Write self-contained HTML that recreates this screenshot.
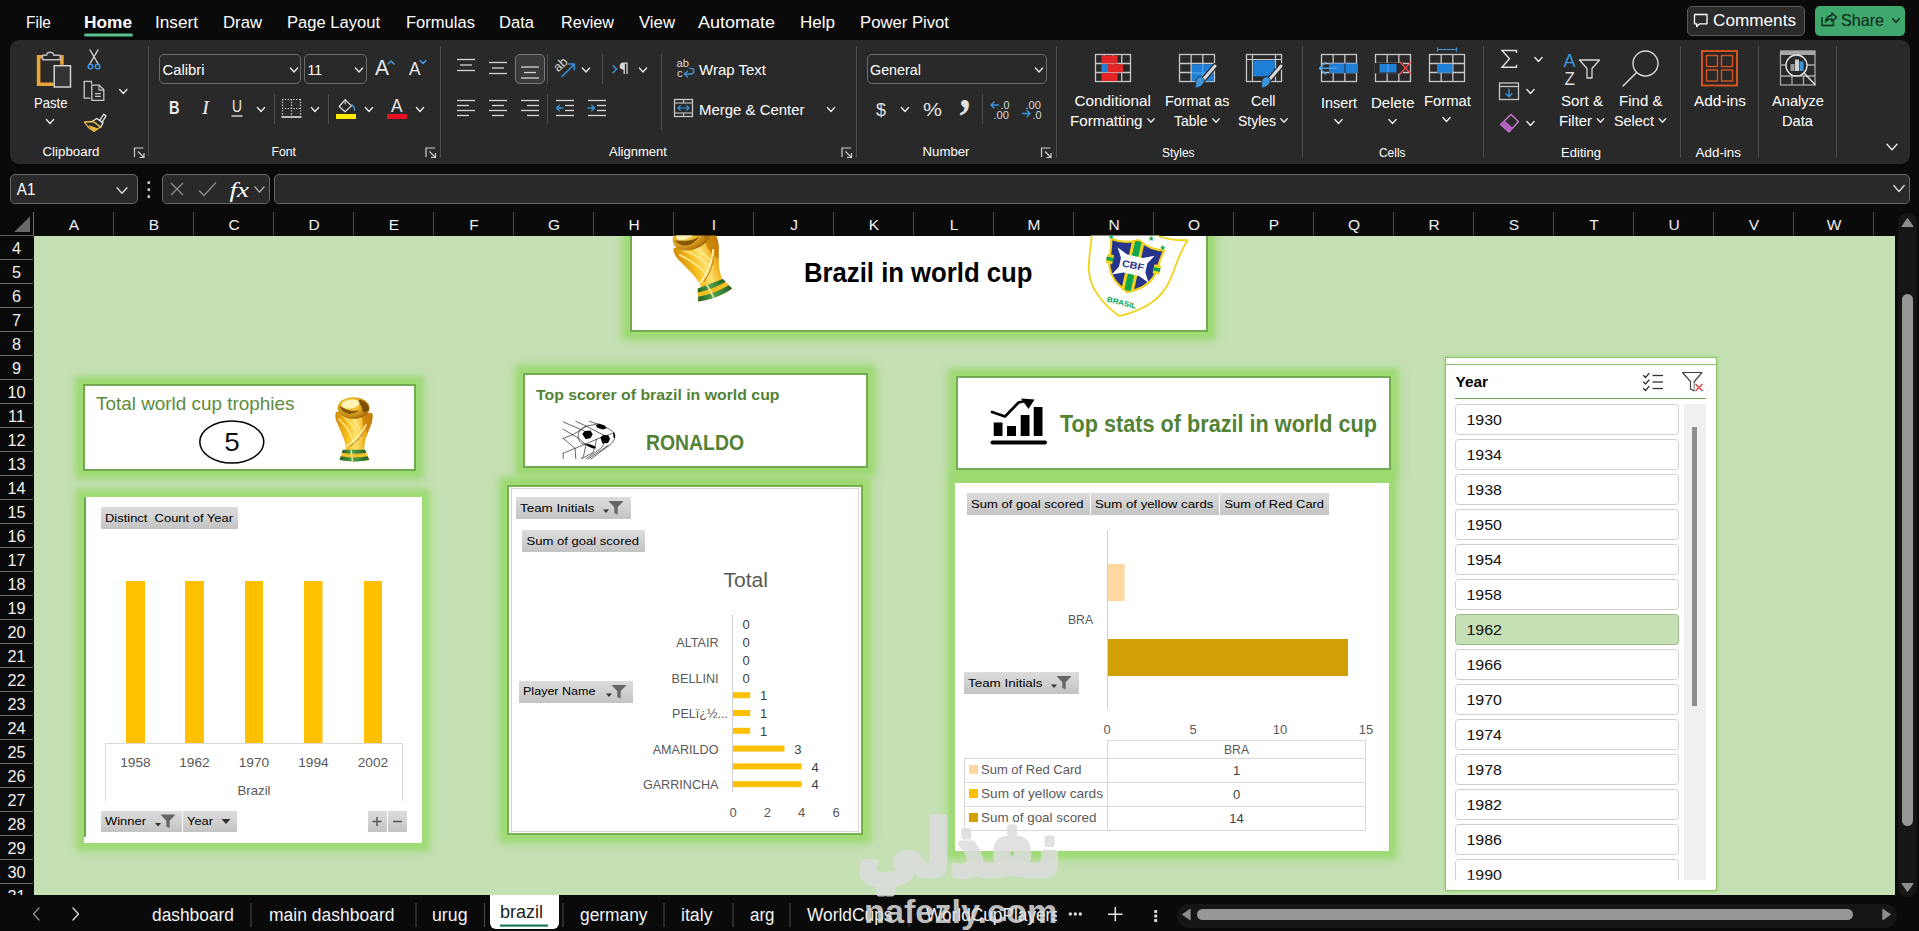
<!DOCTYPE html>
<html lang="en"><head><meta charset="utf-8"><title>Brazil in world cup - Excel</title>
<style>
*{margin:0;padding:0;box-sizing:border-box}
html,body{width:1919px;height:931px;overflow:hidden;background:#0a0a0a;font-family:"Liberation Sans", sans-serif;}
#app{position:relative;width:1919px;height:931px;overflow:hidden;background:#0a0a0a}
.a{position:absolute}
#ribbon{left:10px;top:40px;width:1900px;height:124px;background:#292929;border-radius:9px}
.fbox{background:#292929;border:1px solid #686868;border-radius:5px}
#sheet{left:33px;top:235px;width:1862px;height:660px;background:#c5e0b4;overflow:hidden}
.card{background:#fff;border:2px solid #72aa50}
.gl{box-shadow:0 0 5px 7px rgba(146,216,96,.62),0 0 9px 9px rgba(146,216,96,.34)}
.btn{background:linear-gradient(#dcdcdc,#d2d2d2 45%,#c3c3c3);}
svg{position:absolute;left:0;top:0;overflow:visible}
svg text{white-space:pre}
</style></head>
<body><div id="app">
<div id="ribbon" class="a"></div>
<div id="namebox" class="a fbox" style="left:10px;top:174px;width:128px;height:30px;"></div>
<div id="fxbox" class="a fbox" style="left:162px;top:174px;width:108px;height:30px;"></div>
<div id="formula" class="a fbox" style="left:274px;top:174px;width:1636px;height:30px;"></div>
<div id="comments" class="a" style="left:1687px;top:6px;width:118px;height:30px;background:#2b2b2b;border:1px solid #5a5a5a;border-radius:5px"></div>
<div id="share" class="a" style="left:1815px;top:6px;width:90px;height:30px;background:#3fa86c;border-radius:5px"></div>
<div class="a" style="left:515px;top:54px;width:30px;height:30px;background:#3a3a3a;border:1px solid #7a7a7a;border-radius:5px"></div>
<div class="a" style="left:159px;top:54px;width:142px;height:30px;border:1px solid #6c6c6c;border-radius:5px"></div>
<div class="a" style="left:304px;top:54px;width:63px;height:30px;border:1px solid #6c6c6c;border-radius:5px"></div>
<div class="a" style="left:867px;top:54px;width:180px;height:30px;border:1px solid #6c6c6c;border-radius:5px"></div>
<div id="sheet" class="a"></div>
<div class="a gl" style="left:630px;top:226px;width:577.5px;height:105.5px"></div>
<div class="a gl" style="left:83px;top:384px;width:332.5px;height:86.5px"></div>
<div class="a gl" style="left:84px;top:497px;width:337.5px;height:346px"></div>
<div class="a gl" style="left:523px;top:372.5px;width:344.5px;height:95px"></div>
<div class="a gl" style="left:507px;top:484.5px;width:355.5px;height:350.5px"></div>
<div class="a gl" style="left:956px;top:375.5px;width:435px;height:94px"></div>
<div class="a gl" style="left:954.5px;top:483px;width:434px;height:368px"></div>
<div class="a card" style="left:630px;top:226px;width:577.5px;height:105.5px;"></div>
<div class="a card" style="left:83px;top:384px;width:332.5px;height:86.5px;"></div>
<div class="a" style="left:84px;top:497px;width:337.5px;height:346px;background:#fff"></div>
<div class="a" style="left:84px;top:497px;width:2px;height:339.5px;background:#6aa84f"></div>
<div class="a btn" style="left:101px;top:507px;width:137px;height:22px;"></div>
<div class="a btn" style="left:101px;top:810.5px;width:81px;height:21.5px;"></div>
<div class="a btn" style="left:183px;top:810.5px;width:54px;height:21.5px;"></div>
<div class="a btn" style="left:367.5px;top:810.5px;width:19.5px;height:21.5px;"></div>
<div class="a btn" style="left:388px;top:810.5px;width:19px;height:21.5px;"></div>
<div class="a card" style="left:523px;top:372.5px;width:344.5px;height:95px;"></div>
<div class="a card" style="left:507px;top:484.5px;width:355.5px;height:350.5px;border-color:#76b24c"></div>
<div class="a" style="left:510.5px;top:488px;width:348.5px;height:343.5px;border:1px solid #d4d4d4"></div>
<div class="a btn" style="left:516px;top:497px;width:115px;height:22px;"></div>
<div class="a btn" style="left:522px;top:530px;width:123px;height:22px;"></div>
<div class="a btn" style="left:519px;top:681px;width:113.5px;height:21.5px;"></div>
<div class="a card" style="left:956px;top:375.5px;width:435px;height:94px;"></div>
<div class="a" style="left:954.5px;top:483px;width:434px;height:368px;background:#fff"></div>
<div class="a btn" style="left:967px;top:493px;width:122.5px;height:22px;"></div>
<div class="a btn" style="left:1091px;top:493px;width:128px;height:22px;"></div>
<div class="a btn" style="left:1220px;top:493px;width:109px;height:22px;"></div>
<div class="a btn" style="left:964px;top:672px;width:115px;height:22px;"></div>
<div class="a" style="left:1444.5px;top:357px;width:272.5px;height:534px;background:#fff;border:1px solid #8cc168;box-shadow:0 0 3px 1px rgba(150,214,104,.6)"></div>
<div class="a" style="left:1445px;top:364px;width:271.5px;height:1px;background:#8cc168"></div>
<div class="a" style="left:1683.5px;top:404px;width:22.5px;height:475.7px;background:#f0f0f0"></div>
<div class="a" style="left:1691.8px;top:427px;width:5.4px;height:279px;background:#8f8f8f"></div>
<div class="a" style="left:0px;top:205px;width:1919px;height:30.5px;background:#0a0a0a"></div>
<div class="a" style="left:0px;top:235px;width:33.5px;height:660px;background:#0a0a0a"></div>
<div class="a" style="left:1895px;top:205px;width:24px;height:690px;background:#0a0a0a"></div>
<div class="a" style="left:0px;top:895px;width:1919px;height:36px;background:#0a0a0a"></div>
<div class="a" style="left:489.5px;top:895px;width:69px;height:34px;background:#fff;border-radius:0 0 6px 6px"></div>
<svg width="1919" height="931" viewBox="0 0 1919 931">
<defs>
<clipPath id="sheetclip"><rect x="33.5" y="235.5" width="1861.5" height="659.5"/></clipPath>
<linearGradient id="gold" x1="0" y1="0" x2="1" y2="0"><stop offset="0" stop-color="#cf8a0a"/><stop offset=".3" stop-color="#f6bd1c"/><stop offset=".55" stop-color="#fde272"/><stop offset=".8" stop-color="#efae16"/><stop offset="1" stop-color="#bd7808"/></linearGradient>
<radialGradient id="globe" cx=".4" cy=".35" r=".75"><stop offset="0" stop-color="#fff0a8"/><stop offset=".35" stop-color="#f1bf30"/><stop offset=".8" stop-color="#b87a0e"/><stop offset="1" stop-color="#8a5608"/></radialGradient>
<linearGradient id="grn" x1="0" y1="0" x2="1" y2="0"><stop offset="0" stop-color="#1f5f26"/><stop offset=".45" stop-color="#4fa24a"/><stop offset="1" stop-color="#1f5f26"/></linearGradient>
<g id="trophy">
 <path d="M2 15c-1 3-.8 6 .3 9l7.200 17c1.200 3 2.200 7 2.700 12.500h18c.2-5.500 .8-9.500 1.800-12.500l5.500-15c1-3 1.500-6.500 .8-10z" fill="url(#gold)"/>
 <path d="M28 15l10 3c.6 3.500 0 7-1 10l-3.500 8c-2.500-3-4.500-7-5-11z" fill="#c17a0a" opacity=".75"/>
 <path d="M5 22c6 6 12 14 15 24M9 19c6 5 13 13 17 22M14 18c5 4 10 10 13 17" stroke="#ffe98a" stroke-width="1.600" fill="none" opacity=".9" stroke-linecap="round"/>
 <path d="M32 28c-4 9-11 16-19 21" stroke="#fff3b0" stroke-width="1.800" fill="none" opacity=".9" stroke-linecap="round"/>
 <path d="M30.500 33c-3.500 7-9 12.500-15 16.500" stroke="#b9770c" stroke-width="1.200" fill="none" opacity=".7"/>
 <ellipse cx="19.500" cy="11" rx="16" ry="10.800" fill="url(#globe)"/>
 <path d="M26 2.500c5 1.500 8.500 5 9 9.500-1.500 2.500-3.500 3.500-6 3-1-4.500-2.500-8-5.500-10.500z" fill="#6e4205" opacity=".85"/>
 <path d="M5.500 9c1 4 4.500 7 9.500 8 4-.3 7.500-1.500 10-3.500-4 .8-8 .5-11.500-.8-3.500-1.300-6-2.500-8-3.700z" fill="#6e4205" opacity=".8"/>
 <ellipse cx="16.500" cy="7" rx="9" ry="4.300" fill="#fff3b8" transform="rotate(-8 16.500 7)"/>
 <path d="M9 52.800h22l4.300 10c-9.500 2.300-20 2.300-29.800 0z" fill="#f3bd24"/>
 <path d="M9 52.800h22l1.300 3c-8 1.400-16.500 1.400-24.600 0z" fill="url(#grn)"/>
 <path d="M6.800 59.300c8.600 1.600 18 1.600 26.800 0l1.700 3.500c-9.500 2.300-20 2.300-29.800 0z" fill="url(#grn)"/>
 <path d="M17 52.500l1.500 12" stroke="#fff8c8" stroke-width="1.500" opacity=".8"/>
</g>
</defs>
<g clip-path="url(#sheetclip)">
<use href="#trophy" transform="translate(664.500 232.300) rotate(-21) scale(1.220)"/>
<g transform="translate(1132.500 268) rotate(12.500)">
<path d="M-46-40c14 6 31 5 45-3 14 8 31 10 47 5-7 20-5 34-10 48-6 17-20 28-37 36-18-8-32-19-37-36-4-14-2-30-8-50z" fill="#fff" stroke="#f3d21c" stroke-width="1.7" stroke-linejoin="round" transform="translate(-1.500 1) scale(1.070 1.060)"/>
<g transform="translate(0 -2) scale(.9 .92)">
<path d="M-30-24c10 2 21 0 30-5 9 5 20 7 30 5-3 13-2 22-5 31-4 11-13 17-25 22-12-5-21-11-25-22-3-9-2-18-5-31z" fill="#27348b" stroke="#f3d21c" stroke-width="2.4" stroke-linejoin="round"/>
<rect x="-7" y="-27.5" width="14" height="54.5" fill="#f3d21c" />
<rect x="-3.6" y="-27.5" width="7.2" height="54.5" fill="#12a650" />
<path d="M-30.500-7h7.500v10h-7.500zM23-7h7.500v10h-7.500z" fill="#f3d21c" />
<path d="M-30.500-4h7.500v4h-7.500zM23-4h7.500v4h-7.500z" fill="#12a650" />
<path d="M-21-16l12 5h18l12-5-6 10v10l6 10-12-5h-18l-12 5 6-10v-10z" fill="#fff" />
<text x="0" y="2.8" font-family='"Liberation Sans", sans-serif' font-size="10.5" fill="#27348b" font-weight="700" text-anchor="middle" textLength="25" lengthAdjust="spacingAndGlyphs" >CBF</text>
</g>
</g>
<text x="0" y="0" font-family='"Liberation Sans", sans-serif' font-size="7.4" fill="#12a650" font-weight="700" textLength="30" lengthAdjust="spacingAndGlyphs" transform="translate(1106.500 301.500) rotate(14)">BRASIL</text>
<text x="1111" y="239.2" font-family='"DejaVu Sans", sans-serif' font-size="7.5" fill="#12a650" text-anchor="middle" >★</text>
<text x="1130.5" y="233.7" font-family='"DejaVu Sans", sans-serif' font-size="7.5" fill="#12a650" text-anchor="middle" >★</text>
<text x="1151" y="241.2" font-family='"DejaVu Sans", sans-serif' font-size="7.5" fill="#12a650" text-anchor="middle" >★</text>
<text x="1162.5" y="249.7" font-family='"DejaVu Sans", sans-serif' font-size="7.5" fill="#12a650" text-anchor="middle" >★</text>
</g>
<text x="804" y="281.932" font-family='"Liberation Sans", sans-serif' font-size="28" fill="#000" font-weight="700" textLength="228.5" lengthAdjust="spacingAndGlyphs" >Brazil in world cup</text>
<text x="96" y="409.5" font-family='"Liberation Sans", sans-serif' font-size="18.5" fill="#5d8b3c" textLength="198.5" lengthAdjust="spacingAndGlyphs" >Total world cup trophies</text>
<ellipse cx="231.8" cy="442" rx="32" ry="21" fill="none" stroke="#000" stroke-width="1.5" />
<text x="232" y="450.944" font-family='"Liberation Sans", sans-serif' font-size="26" fill="#111" text-anchor="middle" textLength="15.5" lengthAdjust="spacingAndGlyphs" >5</text>
<use href="#trophy" transform="translate(334 397)"/>
<text x="105" y="521.99" font-family='"Liberation Sans", sans-serif' font-size="11.6" fill="#000" textLength="128" lengthAdjust="spacingAndGlyphs" >Distinct  Count of Year</text>
<rect x="126" y="581" width="19" height="162" fill="#ffc000" />
<rect x="185" y="581" width="19" height="162" fill="#ffc000" />
<rect x="245" y="581" width="18" height="162" fill="#ffc000" />
<rect x="304" y="581" width="18.5" height="162" fill="#ffc000" />
<rect x="364" y="581" width="18" height="162" fill="#ffc000" />
<path d="M105.500 801V743.500H402.500V801" fill="none" stroke="#d9d9d9" stroke-width="1" />
<text x="135.5" y="766.972" font-family='"Liberation Sans", sans-serif' font-size="13" fill="#595959" text-anchor="middle" textLength="30.5" lengthAdjust="spacingAndGlyphs" >1958</text>
<text x="194.5" y="766.972" font-family='"Liberation Sans", sans-serif' font-size="13" fill="#595959" text-anchor="middle" textLength="30.5" lengthAdjust="spacingAndGlyphs" >1962</text>
<text x="254" y="766.972" font-family='"Liberation Sans", sans-serif' font-size="13" fill="#595959" text-anchor="middle" textLength="30.5" lengthAdjust="spacingAndGlyphs" >1970</text>
<text x="313.5" y="766.972" font-family='"Liberation Sans", sans-serif' font-size="13" fill="#595959" text-anchor="middle" textLength="30.5" lengthAdjust="spacingAndGlyphs" >1994</text>
<text x="373" y="766.972" font-family='"Liberation Sans", sans-serif' font-size="13" fill="#595959" text-anchor="middle" textLength="30.5" lengthAdjust="spacingAndGlyphs" >2002</text>
<text x="254" y="795.472" font-family='"Liberation Sans", sans-serif' font-size="13" fill="#595959" text-anchor="middle" textLength="33" lengthAdjust="spacingAndGlyphs" >Brazil</text>
<text x="105" y="824.99" font-family='"Liberation Sans", sans-serif' font-size="11.6" fill="#000" textLength="41" lengthAdjust="spacingAndGlyphs" >Winner</text>
<path d="M155 823h6l-3 3.500z" fill="#333" />
<path d="M160.5 814.5h15l-5.800 6.300v7.200l-3.400-1.500v-5.700z" fill="#666" />
<text x="187" y="824.99" font-family='"Liberation Sans", sans-serif' font-size="11.6" fill="#000" textLength="26" lengthAdjust="spacingAndGlyphs" >Year</text>
<path d="M221.500 819h9l-4.500 5z" fill="#333" />
<path d="M372.500 821.500h9M377 817v9" fill="none" stroke="#555" stroke-width="1.5" />
<path d="M393 821.500h9" fill="none" stroke="#555" stroke-width="1.5" />
<text x="536" y="399.5" font-family='"Liberation Sans", sans-serif' font-size="15.3" fill="#548235" font-weight="700" textLength="243.5" lengthAdjust="spacingAndGlyphs" >Top scorer of brazil in world cup</text>
<text x="646" y="449.999" font-family='"Liberation Sans", sans-serif' font-size="21.8" fill="#548235" font-weight="700" textLength="98" lengthAdjust="spacingAndGlyphs" >RONALDO</text>
<g stroke="#222" fill="none" stroke-width=".68" stroke-linecap="round" stroke-linejoin="round">
<path d="M563.200 421.900L583.500 430.600M563.200 429.300L579 438.400L586 444.800M563.200 438.400L573.200 434.500L586.800 426.100L598.400 423.900M563.200 438.400L575.100 448.400L575.800 458.700M563.200 453.200L575.100 448.400L586.100 443.800L596.400 439.300L611.900 433.500M563.200 453.200V458.700M575.800 421.300L586.100 426.100L603.500 435.100M589.300 421.300L599 424.500C606 427 611 429.500 613.500 432.600C615 435 615 437 614.500 438.500C613.500 441.500 612 443 610 444.800L591.300 458.700M586.100 443.800L583.500 456.400L581 458.700M596.400 439.300L595.100 446.100L592.900 452.600L582.200 458.400M604.800 435.800L602.900 446.100L600.300 448.700L586.100 458.700M588.500 458.700L608 445.500M586.100 426.100C582 428 579.500 430 579 432C578 434.500 578 436.500 578.400 438.400C579 441 580.500 442.500 582.200 443.500L586.100 444.800" fill="none" />
</g>
<path d="M582.300 434l2.200-3 6-0.600 2.200 3.800-2.200 4-5 .8z" fill="#000" />
<path d="M595.800 425.500l3.500-1.700 5.500 1.800 1.800 2.700-3.800 1.200-5.500-1.800z" fill="#000" />
<path d="M600.300 437.500l3.200-2.700 5 .8 1.500 3.500-2 3.800-5.500 .6z" fill="#000" />
<path d="M586 444l4 .3 5.500 2.300 .3 1.800-3.500-.2-5-2.200z" fill="#000" />
<path d="M613.300 432.500c1.200 1.800 1.300 3.500 .8 5.300" fill="none" stroke="#000" stroke-width="1.6" />
<text x="520" y="511.99" font-family='"Liberation Sans", sans-serif' font-size="11.6" fill="#000" textLength="74.5" lengthAdjust="spacingAndGlyphs" >Team Initials</text>
<path d="M603 509.5h6l-3 3.500z" fill="#333" />
<path d="M608.5 501h15l-5.800 6.300v7.200l-3.400-1.500v-5.700z" fill="#666" />
<text x="526.5" y="544.99" font-family='"Liberation Sans", sans-serif' font-size="11.6" fill="#000" textLength="112.5" lengthAdjust="spacingAndGlyphs" >Sum of goal scored</text>
<text x="523" y="695.49" font-family='"Liberation Sans", sans-serif' font-size="11.6" fill="#000" textLength="72.5" lengthAdjust="spacingAndGlyphs" >Player Name</text>
<path d="M606 693.5h6l-3 3.500z" fill="#333" />
<path d="M611.5 685h15l-5.800 6.300v7.200l-3.400-1.500v-5.700z" fill="#666" />
<text x="723.5" y="587.052" font-family='"Liberation Sans", sans-serif' font-size="20.5" fill="#595959" textLength="44.5" lengthAdjust="spacingAndGlyphs" >Total</text>
<line x1="732.5" y1="614" x2="732.5" y2="792" stroke="#d0d0d0" stroke-width="1" />
<text x="746" y="629.272" font-family='"Liberation Sans", sans-serif' font-size="13" fill="#404040" text-anchor="middle" >0</text>
<text x="746" y="647.072" font-family='"Liberation Sans", sans-serif' font-size="13" fill="#404040" text-anchor="middle" >0</text>
<text x="746" y="664.872" font-family='"Liberation Sans", sans-serif' font-size="13" fill="#404040" text-anchor="middle" >0</text>
<text x="746" y="682.672" font-family='"Liberation Sans", sans-serif' font-size="13" fill="#404040" text-anchor="middle" >0</text>
<rect x="733" y="692.2" width="17.15" height="6" fill="#ffc000" />
<text x="763.65" y="700.472" font-family='"Liberation Sans", sans-serif' font-size="13" fill="#404040" text-anchor="middle" >1</text>
<rect x="733" y="710" width="17.15" height="6" fill="#ffc000" />
<text x="763.65" y="718.272" font-family='"Liberation Sans", sans-serif' font-size="13" fill="#404040" text-anchor="middle" >1</text>
<rect x="733" y="727.8" width="17.15" height="6" fill="#ffc000" />
<text x="763.65" y="736.072" font-family='"Liberation Sans", sans-serif' font-size="13" fill="#404040" text-anchor="middle" >1</text>
<rect x="733" y="745.6" width="51.45" height="6" fill="#ffc000" />
<text x="797.95" y="753.872" font-family='"Liberation Sans", sans-serif' font-size="13" fill="#404040" text-anchor="middle" >3</text>
<rect x="733" y="763.4" width="68.6" height="6" fill="#ffc000" />
<text x="815.1" y="771.672" font-family='"Liberation Sans", sans-serif' font-size="13" fill="#404040" text-anchor="middle" >4</text>
<rect x="733" y="781.2" width="68.6" height="6" fill="#ffc000" />
<text x="815.1" y="789.472" font-family='"Liberation Sans", sans-serif' font-size="13" fill="#404040" text-anchor="middle" >4</text>
<text x="718.5" y="646.934" font-family='"Liberation Sans", sans-serif' font-size="12.6" fill="#595959" text-anchor="end" >ALTAIR</text>
<text x="718.5" y="682.534" font-family='"Liberation Sans", sans-serif' font-size="12.6" fill="#595959" text-anchor="end" >BELLINI</text>
<text x="728" y="718.134" font-family='"Liberation Sans", sans-serif' font-size="12.6" fill="#595959" text-anchor="end" >PELï¿½...</text>
<text x="718.5" y="753.734" font-family='"Liberation Sans", sans-serif' font-size="12.6" fill="#595959" text-anchor="end" >AMARILDO</text>
<text x="718.5" y="789.334" font-family='"Liberation Sans", sans-serif' font-size="12.6" fill="#595959" text-anchor="end" >GARRINCHA</text>
<text x="733" y="817.072" font-family='"Liberation Sans", sans-serif' font-size="13" fill="#595959" text-anchor="middle" >0</text>
<text x="767.3" y="817.072" font-family='"Liberation Sans", sans-serif' font-size="13" fill="#595959" text-anchor="middle" >2</text>
<text x="801.6" y="817.072" font-family='"Liberation Sans", sans-serif' font-size="13" fill="#595959" text-anchor="middle" >4</text>
<text x="836" y="817.072" font-family='"Liberation Sans", sans-serif' font-size="13" fill="#595959" text-anchor="middle" >6</text>
<text x="1060" y="431.5" font-family='"Liberation Sans", sans-serif' font-size="23.3" fill="#548235" font-weight="700" textLength="317" lengthAdjust="spacingAndGlyphs" >Top stats of brazil in world cup</text>
<rect x="990.5" y="440.5" width="56.5" height="4" fill="#000" rx="2" />
<rect x="993.7" y="422.5" width="8.8" height="13.5" fill="#000" />
<rect x="1007" y="426" width="9" height="10" fill="#000" />
<rect x="1020.7" y="415" width="8.8" height="21" fill="#000" />
<rect x="1033.7" y="407" width="8.8" height="29" fill="#000" />
<path d="M992 412l13 4.500 13.500-14 9-2" fill="none" stroke="#000" stroke-width="2.6" stroke-linecap="round" stroke-linejoin="round"/>
<path d="M1021 398.500l13.500 1-6 9.500z" fill="#000" />
<text x="971" y="507.99" font-family='"Liberation Sans", sans-serif' font-size="11.6" fill="#000" textLength="112.5" lengthAdjust="spacingAndGlyphs" >Sum of goal scored</text>
<text x="1095" y="507.99" font-family='"Liberation Sans", sans-serif' font-size="11.6" fill="#000" textLength="118.5" lengthAdjust="spacingAndGlyphs" >Sum of yellow cards</text>
<text x="1224.5" y="507.99" font-family='"Liberation Sans", sans-serif' font-size="11.6" fill="#000" textLength="99.5" lengthAdjust="spacingAndGlyphs" >Sum of Red Card</text>
<line x1="1107.5" y1="530" x2="1107.5" y2="709.5" stroke="#d0d0d0" stroke-width="1" />
<rect x="1108" y="564" width="16.7" height="37" fill="#ffd8a0" />
<rect x="1108" y="639" width="240" height="37" fill="#d29f04" />
<text x="1068" y="624.334" font-family='"Liberation Sans", sans-serif' font-size="12.6" fill="#595959" textLength="25" lengthAdjust="spacingAndGlyphs" >BRA</text>
<text x="968" y="686.99" font-family='"Liberation Sans", sans-serif' font-size="11.6" fill="#000" textLength="74.5" lengthAdjust="spacingAndGlyphs" >Team Initials</text>
<path d="M1051 684.5h6l-3 3.500z" fill="#333" />
<path d="M1056.5 676h15l-5.800 6.300v7.200l-3.400-1.500v-5.700z" fill="#666" />
<text x="1107" y="734.472" font-family='"Liberation Sans", sans-serif' font-size="13" fill="#595959" text-anchor="middle" >0</text>
<text x="1193" y="734.472" font-family='"Liberation Sans", sans-serif' font-size="13" fill="#595959" text-anchor="middle" >5</text>
<text x="1280" y="734.472" font-family='"Liberation Sans", sans-serif' font-size="13" fill="#595959" text-anchor="middle" >10</text>
<text x="1366" y="734.472" font-family='"Liberation Sans", sans-serif' font-size="13" fill="#595959" text-anchor="middle" >15</text>
<path d="M1107.500 758.500V740.500H1365.500V758.500" fill="none" stroke="#d9d9d9" stroke-width="1" />
<rect x="964.5" y="758.5" width="401" height="72" fill="none" stroke="#d9d9d9" stroke-width="1" />
<line x1="1107.5" y1="758.5" x2="1107.5" y2="830.5" stroke="#d9d9d9" stroke-width="1" />
<line x1="964.5" y1="782.5" x2="1365.5" y2="782.5" stroke="#d9d9d9" stroke-width="1" />
<line x1="964.5" y1="806.5" x2="1365.5" y2="806.5" stroke="#d9d9d9" stroke-width="1" />
<text x="1236.5" y="753.834" font-family='"Liberation Sans", sans-serif' font-size="12.6" fill="#595959" text-anchor="middle" textLength="25" lengthAdjust="spacingAndGlyphs" >BRA</text>
<rect x="969" y="765" width="9" height="9" fill="#ffd8a0" />
<text x="981" y="773.834" font-family='"Liberation Sans", sans-serif' font-size="12.6" fill="#595959" textLength="100.5" lengthAdjust="spacingAndGlyphs" >Sum of Red Card</text>
<text x="1236.5" y="774.972" font-family='"Liberation Sans", sans-serif' font-size="13" fill="#404040" text-anchor="middle" >1</text>
<rect x="969" y="789" width="9" height="9" fill="#ffc000" />
<text x="981" y="797.834" font-family='"Liberation Sans", sans-serif' font-size="12.6" fill="#595959" textLength="122" lengthAdjust="spacingAndGlyphs" >Sum of yellow cards</text>
<text x="1236.5" y="798.972" font-family='"Liberation Sans", sans-serif' font-size="13" fill="#404040" text-anchor="middle" >0</text>
<rect x="969" y="813" width="9" height="9" fill="#d29f04" />
<text x="981" y="821.834" font-family='"Liberation Sans", sans-serif' font-size="12.6" fill="#595959" textLength="115.5" lengthAdjust="spacingAndGlyphs" >Sum of goal scored</text>
<text x="1236.5" y="822.972" font-family='"Liberation Sans", sans-serif' font-size="13" fill="#404040" text-anchor="middle" >14</text>
<text x="1455.5" y="387.022" font-family='"Liberation Sans", sans-serif' font-size="14.6" fill="#000" font-weight="700" textLength="32.5" lengthAdjust="spacingAndGlyphs" >Year</text>
<line x1="1455" y1="398.5" x2="1706" y2="398.5" stroke="#6aa84f" stroke-width="1.2" />
<path d="M1643.500 375.5l2 2 3.500-4" fill="none" stroke="#333" stroke-width="1.2" stroke-linecap="round" stroke-linejoin="round"/>
<line x1="1652.5" y1="375.5" x2="1663" y2="375.5" stroke="#333" stroke-width="1.3" />
<path d="M1643.500 382l2 2 3.500-4" fill="none" stroke="#333" stroke-width="1.2" stroke-linecap="round" stroke-linejoin="round"/>
<line x1="1652.5" y1="382" x2="1663" y2="382" stroke="#333" stroke-width="1.3" />
<path d="M1643.500 388.5l2 2 3.500-4" fill="none" stroke="#333" stroke-width="1.2" stroke-linecap="round" stroke-linejoin="round"/>
<line x1="1652.5" y1="388.5" x2="1663" y2="388.5" stroke="#333" stroke-width="1.3" />
<path d="M1682.500 372.500h19.500l-7.700 9v9.500l-3.800-2v-7.500z" fill="none" stroke="#444" stroke-width="1.2" stroke-linejoin="round"/>
<rect x="1694.5" y="383" width="9" height="9" fill="#fff" />
<path d="M1695.500 384l7 7M1702.500 384l-7 7" fill="none" stroke="#e03c3c" stroke-width="1.3" />
<clipPath id="slc"><rect x="1446" y="400" width="236" height="479.700"/></clipPath>
<g clip-path="url(#slc)">
<rect x="1455.5" y="404.5" width="223" height="30" fill="#fff" rx="3" stroke="#cfcfcf" stroke-width="1" />
<text x="1466.5" y="425.229" font-family='"Liberation Sans", sans-serif' font-size="15.2" fill="#111" textLength="35.5" lengthAdjust="spacingAndGlyphs" >1930</text>
<rect x="1455.5" y="439.5" width="223" height="30" fill="#fff" rx="3" stroke="#cfcfcf" stroke-width="1" />
<text x="1466.5" y="460.229" font-family='"Liberation Sans", sans-serif' font-size="15.2" fill="#111" textLength="35.5" lengthAdjust="spacingAndGlyphs" >1934</text>
<rect x="1455.5" y="474.5" width="223" height="30" fill="#fff" rx="3" stroke="#cfcfcf" stroke-width="1" />
<text x="1466.5" y="495.229" font-family='"Liberation Sans", sans-serif' font-size="15.2" fill="#111" textLength="35.5" lengthAdjust="spacingAndGlyphs" >1938</text>
<rect x="1455.5" y="509.5" width="223" height="30" fill="#fff" rx="3" stroke="#cfcfcf" stroke-width="1" />
<text x="1466.5" y="530.229" font-family='"Liberation Sans", sans-serif' font-size="15.2" fill="#111" textLength="35.5" lengthAdjust="spacingAndGlyphs" >1950</text>
<rect x="1455.5" y="544.5" width="223" height="30" fill="#fff" rx="3" stroke="#cfcfcf" stroke-width="1" />
<text x="1466.5" y="565.229" font-family='"Liberation Sans", sans-serif' font-size="15.2" fill="#111" textLength="35.5" lengthAdjust="spacingAndGlyphs" >1954</text>
<rect x="1455.5" y="579.5" width="223" height="30" fill="#fff" rx="3" stroke="#cfcfcf" stroke-width="1" />
<text x="1466.5" y="600.229" font-family='"Liberation Sans", sans-serif' font-size="15.2" fill="#111" textLength="35.5" lengthAdjust="spacingAndGlyphs" >1958</text>
<rect x="1455.5" y="614.5" width="223" height="30" fill="#c5e0b4" rx="3" stroke="#9ab888" stroke-width="1" />
<text x="1466.5" y="635.229" font-family='"Liberation Sans", sans-serif' font-size="15.2" fill="#111" textLength="35.5" lengthAdjust="spacingAndGlyphs" >1962</text>
<rect x="1455.5" y="649.5" width="223" height="30" fill="#fff" rx="3" stroke="#cfcfcf" stroke-width="1" />
<text x="1466.5" y="670.229" font-family='"Liberation Sans", sans-serif' font-size="15.2" fill="#111" textLength="35.5" lengthAdjust="spacingAndGlyphs" >1966</text>
<rect x="1455.5" y="684.5" width="223" height="30" fill="#fff" rx="3" stroke="#cfcfcf" stroke-width="1" />
<text x="1466.5" y="705.229" font-family='"Liberation Sans", sans-serif' font-size="15.2" fill="#111" textLength="35.5" lengthAdjust="spacingAndGlyphs" >1970</text>
<rect x="1455.5" y="719.5" width="223" height="30" fill="#fff" rx="3" stroke="#cfcfcf" stroke-width="1" />
<text x="1466.5" y="740.229" font-family='"Liberation Sans", sans-serif' font-size="15.2" fill="#111" textLength="35.5" lengthAdjust="spacingAndGlyphs" >1974</text>
<rect x="1455.5" y="754.5" width="223" height="30" fill="#fff" rx="3" stroke="#cfcfcf" stroke-width="1" />
<text x="1466.5" y="775.229" font-family='"Liberation Sans", sans-serif' font-size="15.2" fill="#111" textLength="35.5" lengthAdjust="spacingAndGlyphs" >1978</text>
<rect x="1455.5" y="789.5" width="223" height="30" fill="#fff" rx="3" stroke="#cfcfcf" stroke-width="1" />
<text x="1466.5" y="810.229" font-family='"Liberation Sans", sans-serif' font-size="15.2" fill="#111" textLength="35.5" lengthAdjust="spacingAndGlyphs" >1982</text>
<rect x="1455.5" y="824.5" width="223" height="30" fill="#fff" rx="3" stroke="#cfcfcf" stroke-width="1" />
<text x="1466.5" y="845.229" font-family='"Liberation Sans", sans-serif' font-size="15.2" fill="#111" textLength="35.5" lengthAdjust="spacingAndGlyphs" >1986</text>
<rect x="1455.5" y="859.5" width="223" height="30" fill="#fff" rx="3" stroke="#cfcfcf" stroke-width="1" />
<text x="1466.5" y="880.229" font-family='"Liberation Sans", sans-serif' font-size="15.2" fill="#111" textLength="35.5" lengthAdjust="spacingAndGlyphs" >1990</text>
</g>
<text x="26" y="28.2168" font-family='"Liberation Sans", sans-serif' font-size="17.2" fill="#ffffff" textLength="25" lengthAdjust="spacingAndGlyphs" >File</text>
<text x="84" y="28.2168" font-family='"Liberation Sans", sans-serif' font-size="17.2" fill="#ffffff" font-weight="700" textLength="48" lengthAdjust="spacingAndGlyphs" >Home</text>
<text x="155" y="28.2168" font-family='"Liberation Sans", sans-serif' font-size="17.2" fill="#ffffff" textLength="43" lengthAdjust="spacingAndGlyphs" >Insert</text>
<text x="223" y="28.2168" font-family='"Liberation Sans", sans-serif' font-size="17.2" fill="#ffffff" textLength="39" lengthAdjust="spacingAndGlyphs" >Draw</text>
<text x="287" y="28.2168" font-family='"Liberation Sans", sans-serif' font-size="17.2" fill="#ffffff" textLength="93" lengthAdjust="spacingAndGlyphs" >Page Layout</text>
<text x="406" y="28.2168" font-family='"Liberation Sans", sans-serif' font-size="17.2" fill="#ffffff" textLength="69" lengthAdjust="spacingAndGlyphs" >Formulas</text>
<text x="499" y="28.2168" font-family='"Liberation Sans", sans-serif' font-size="17.2" fill="#ffffff" textLength="35" lengthAdjust="spacingAndGlyphs" >Data</text>
<text x="561" y="28.2168" font-family='"Liberation Sans", sans-serif' font-size="17.2" fill="#ffffff" textLength="53" lengthAdjust="spacingAndGlyphs" >Review</text>
<text x="639" y="28.2168" font-family='"Liberation Sans", sans-serif' font-size="17.2" fill="#ffffff" textLength="36" lengthAdjust="spacingAndGlyphs" >View</text>
<text x="698" y="28.2168" font-family='"Liberation Sans", sans-serif' font-size="17.2" fill="#ffffff" textLength="77" lengthAdjust="spacingAndGlyphs" >Automate</text>
<text x="800" y="28.2168" font-family='"Liberation Sans", sans-serif' font-size="17.2" fill="#ffffff" textLength="35" lengthAdjust="spacingAndGlyphs" >Help</text>
<text x="860" y="28.2168" font-family='"Liberation Sans", sans-serif' font-size="17.2" fill="#ffffff" textLength="89" lengthAdjust="spacingAndGlyphs" >Power Pivot</text>
<rect x="84" y="33.5" width="49" height="3" fill="#5ec08e" rx="1.5" />
<path d="M1694.500 14.500h12.500v9.300h-7.300l-3 2.800v-2.800h-2.200z" fill="none" stroke="#ffffff" stroke-width="1.3" stroke-linejoin="round"/>
<text x="1713" y="26.176" font-family='"Liberation Sans", sans-serif' font-size="16.5" fill="#ffffff" textLength="83" lengthAdjust="spacingAndGlyphs" >Comments</text>
<path d="M1822 17v8.5h11.5v-4M1825.5 22c.6-4.2 3.2-6.3 6.4-6.5v-2.6l4.6 4.3-4.6 4.3v-2.6c-2.6-.1-4.8.8-6.4 3.1z" fill="none" stroke="#0b2417" stroke-width="1.3" stroke-linejoin="round"/>
<text x="1841" y="26.176" font-family='"Liberation Sans", sans-serif' font-size="16.5" fill="#0b2417" textLength="43" lengthAdjust="spacingAndGlyphs" >Share</text>
<path d="M1892.8 18.7L1896 22.3L1899.2 18.7" fill="none" stroke="#0b2417" stroke-width="1.4" stroke-linecap="round" stroke-linejoin="round"/>
<text x="16.8" y="195.176" font-family='"Liberation Sans", sans-serif' font-size="16.5" fill="#ffffff" textLength="18.5" lengthAdjust="spacingAndGlyphs" >A1</text>
<path d="M117 187.7L122 193.3L127 187.7" fill="none" stroke="#d8d8d8" stroke-width="1.4" stroke-linecap="round" stroke-linejoin="round"/>
<rect x="147.5" y="181.3" width="2.6" height="2.6" fill="#cfcfcf" rx="0.6" />
<rect x="147.5" y="188.3" width="2.6" height="2.6" fill="#cfcfcf" rx="0.6" />
<rect x="147.5" y="195.3" width="2.6" height="2.6" fill="#cfcfcf" rx="0.6" />
<path d="M171 183l12 12M183 183l-12 12" fill="none" stroke="#8a8a8a" stroke-width="1.4" />
<path d="M199 190.5l5 5 12-13" fill="none" stroke="#8a8a8a" stroke-width="1.4" />
<text x="229.5" y="197.052" font-family='"Liberation Serif", serif' font-size="20.5" fill="#ffffff" font-style="italic" textLength="19.5" lengthAdjust="spacingAndGlyphs" >fx</text>
<path d="M254.9 186.9L259.5 192.1L264.1 186.9" fill="none" stroke="#bdbdbd" stroke-width="1.3" stroke-linecap="round" stroke-linejoin="round"/>
<path d="M1893.8 185.5L1899 191.5L1904.2 185.5" fill="none" stroke="#d8d8d8" stroke-width="1.4" stroke-linecap="round" stroke-linejoin="round"/>
<path d="M30 216.500V232H14.200z" fill="#696969" />
<line x1="0" y1="235.5" x2="33.5" y2="235.5" stroke="#5e5e5e" stroke-width="1" />
<line x1="33.5" y1="212" x2="33.5" y2="235.5" stroke="#6e6e6e" stroke-width="1" />
<text x="74" y="229.832" font-family='"Liberation Sans", sans-serif' font-size="15.5" fill="#f0f0f0" text-anchor="middle" >A</text>
<line x1="113.5" y1="212" x2="113.5" y2="235.5" stroke="#4a4a4a" stroke-width="1" />
<text x="154" y="229.832" font-family='"Liberation Sans", sans-serif' font-size="15.5" fill="#f0f0f0" text-anchor="middle" >B</text>
<line x1="193.5" y1="212" x2="193.5" y2="235.5" stroke="#4a4a4a" stroke-width="1" />
<text x="234" y="229.832" font-family='"Liberation Sans", sans-serif' font-size="15.5" fill="#f0f0f0" text-anchor="middle" >C</text>
<line x1="273.5" y1="212" x2="273.5" y2="235.5" stroke="#4a4a4a" stroke-width="1" />
<text x="314" y="229.832" font-family='"Liberation Sans", sans-serif' font-size="15.5" fill="#f0f0f0" text-anchor="middle" >D</text>
<line x1="353.5" y1="212" x2="353.5" y2="235.5" stroke="#4a4a4a" stroke-width="1" />
<text x="394" y="229.832" font-family='"Liberation Sans", sans-serif' font-size="15.5" fill="#f0f0f0" text-anchor="middle" >E</text>
<line x1="433.5" y1="212" x2="433.5" y2="235.5" stroke="#4a4a4a" stroke-width="1" />
<text x="474" y="229.832" font-family='"Liberation Sans", sans-serif' font-size="15.5" fill="#f0f0f0" text-anchor="middle" >F</text>
<line x1="513.5" y1="212" x2="513.5" y2="235.5" stroke="#4a4a4a" stroke-width="1" />
<text x="554" y="229.832" font-family='"Liberation Sans", sans-serif' font-size="15.5" fill="#f0f0f0" text-anchor="middle" >G</text>
<line x1="593.5" y1="212" x2="593.5" y2="235.5" stroke="#4a4a4a" stroke-width="1" />
<text x="634" y="229.832" font-family='"Liberation Sans", sans-serif' font-size="15.5" fill="#f0f0f0" text-anchor="middle" >H</text>
<line x1="673.5" y1="212" x2="673.5" y2="235.5" stroke="#4a4a4a" stroke-width="1" />
<text x="714" y="229.832" font-family='"Liberation Sans", sans-serif' font-size="15.5" fill="#f0f0f0" text-anchor="middle" >I</text>
<line x1="753.5" y1="212" x2="753.5" y2="235.5" stroke="#4a4a4a" stroke-width="1" />
<text x="794" y="229.832" font-family='"Liberation Sans", sans-serif' font-size="15.5" fill="#f0f0f0" text-anchor="middle" >J</text>
<line x1="833.5" y1="212" x2="833.5" y2="235.5" stroke="#4a4a4a" stroke-width="1" />
<text x="874" y="229.832" font-family='"Liberation Sans", sans-serif' font-size="15.5" fill="#f0f0f0" text-anchor="middle" >K</text>
<line x1="913.5" y1="212" x2="913.5" y2="235.5" stroke="#4a4a4a" stroke-width="1" />
<text x="954" y="229.832" font-family='"Liberation Sans", sans-serif' font-size="15.5" fill="#f0f0f0" text-anchor="middle" >L</text>
<line x1="993.5" y1="212" x2="993.5" y2="235.5" stroke="#4a4a4a" stroke-width="1" />
<text x="1034" y="229.832" font-family='"Liberation Sans", sans-serif' font-size="15.5" fill="#f0f0f0" text-anchor="middle" >M</text>
<line x1="1073.5" y1="212" x2="1073.5" y2="235.5" stroke="#4a4a4a" stroke-width="1" />
<text x="1114" y="229.832" font-family='"Liberation Sans", sans-serif' font-size="15.5" fill="#f0f0f0" text-anchor="middle" >N</text>
<line x1="1153.5" y1="212" x2="1153.5" y2="235.5" stroke="#4a4a4a" stroke-width="1" />
<text x="1194" y="229.832" font-family='"Liberation Sans", sans-serif' font-size="15.5" fill="#f0f0f0" text-anchor="middle" >O</text>
<line x1="1233.5" y1="212" x2="1233.5" y2="235.5" stroke="#4a4a4a" stroke-width="1" />
<text x="1274" y="229.832" font-family='"Liberation Sans", sans-serif' font-size="15.5" fill="#f0f0f0" text-anchor="middle" >P</text>
<line x1="1313.5" y1="212" x2="1313.5" y2="235.5" stroke="#4a4a4a" stroke-width="1" />
<text x="1354" y="229.832" font-family='"Liberation Sans", sans-serif' font-size="15.5" fill="#f0f0f0" text-anchor="middle" >Q</text>
<line x1="1393.5" y1="212" x2="1393.5" y2="235.5" stroke="#4a4a4a" stroke-width="1" />
<text x="1434" y="229.832" font-family='"Liberation Sans", sans-serif' font-size="15.5" fill="#f0f0f0" text-anchor="middle" >R</text>
<line x1="1473.5" y1="212" x2="1473.5" y2="235.5" stroke="#4a4a4a" stroke-width="1" />
<text x="1514" y="229.832" font-family='"Liberation Sans", sans-serif' font-size="15.5" fill="#f0f0f0" text-anchor="middle" >S</text>
<line x1="1553.5" y1="212" x2="1553.5" y2="235.5" stroke="#4a4a4a" stroke-width="1" />
<text x="1594" y="229.832" font-family='"Liberation Sans", sans-serif' font-size="15.5" fill="#f0f0f0" text-anchor="middle" >T</text>
<line x1="1633.5" y1="212" x2="1633.5" y2="235.5" stroke="#4a4a4a" stroke-width="1" />
<text x="1674" y="229.832" font-family='"Liberation Sans", sans-serif' font-size="15.5" fill="#f0f0f0" text-anchor="middle" >U</text>
<line x1="1713.5" y1="212" x2="1713.5" y2="235.5" stroke="#4a4a4a" stroke-width="1" />
<text x="1754" y="229.832" font-family='"Liberation Sans", sans-serif' font-size="15.5" fill="#f0f0f0" text-anchor="middle" >V</text>
<line x1="1793.5" y1="212" x2="1793.5" y2="235.5" stroke="#4a4a4a" stroke-width="1" />
<text x="1834" y="229.832" font-family='"Liberation Sans", sans-serif' font-size="15.5" fill="#f0f0f0" text-anchor="middle" >W</text>
<line x1="1873.5" y1="212" x2="1873.5" y2="235.5" stroke="#4a4a4a" stroke-width="1" />
<line x1="0" y1="259.5" x2="33" y2="259.5" stroke="#6a6a6a" stroke-width="1" />
<text x="16.5" y="253.607" font-family='"Liberation Sans", sans-serif' font-size="16.3" fill="#f0f0f0" text-anchor="middle" >4</text>
<line x1="0" y1="283.5" x2="33" y2="283.5" stroke="#6a6a6a" stroke-width="1" />
<text x="16.5" y="277.607" font-family='"Liberation Sans", sans-serif' font-size="16.3" fill="#f0f0f0" text-anchor="middle" >5</text>
<line x1="0" y1="307.5" x2="33" y2="307.5" stroke="#6a6a6a" stroke-width="1" />
<text x="16.5" y="301.607" font-family='"Liberation Sans", sans-serif' font-size="16.3" fill="#f0f0f0" text-anchor="middle" >6</text>
<line x1="0" y1="331.5" x2="33" y2="331.5" stroke="#6a6a6a" stroke-width="1" />
<text x="16.5" y="325.607" font-family='"Liberation Sans", sans-serif' font-size="16.3" fill="#f0f0f0" text-anchor="middle" >7</text>
<line x1="0" y1="355.5" x2="33" y2="355.5" stroke="#6a6a6a" stroke-width="1" />
<text x="16.5" y="349.607" font-family='"Liberation Sans", sans-serif' font-size="16.3" fill="#f0f0f0" text-anchor="middle" >8</text>
<line x1="0" y1="379.5" x2="33" y2="379.5" stroke="#6a6a6a" stroke-width="1" />
<text x="16.5" y="373.607" font-family='"Liberation Sans", sans-serif' font-size="16.3" fill="#f0f0f0" text-anchor="middle" >9</text>
<line x1="0" y1="403.5" x2="33" y2="403.5" stroke="#6a6a6a" stroke-width="1" />
<text x="16.5" y="397.607" font-family='"Liberation Sans", sans-serif' font-size="16.3" fill="#f0f0f0" text-anchor="middle" >10</text>
<line x1="0" y1="427.5" x2="33" y2="427.5" stroke="#6a6a6a" stroke-width="1" />
<text x="16.5" y="421.607" font-family='"Liberation Sans", sans-serif' font-size="16.3" fill="#f0f0f0" text-anchor="middle" >11</text>
<line x1="0" y1="451.5" x2="33" y2="451.5" stroke="#6a6a6a" stroke-width="1" />
<text x="16.5" y="445.607" font-family='"Liberation Sans", sans-serif' font-size="16.3" fill="#f0f0f0" text-anchor="middle" >12</text>
<line x1="0" y1="475.5" x2="33" y2="475.5" stroke="#6a6a6a" stroke-width="1" />
<text x="16.5" y="469.607" font-family='"Liberation Sans", sans-serif' font-size="16.3" fill="#f0f0f0" text-anchor="middle" >13</text>
<line x1="0" y1="499.5" x2="33" y2="499.5" stroke="#6a6a6a" stroke-width="1" />
<text x="16.5" y="493.607" font-family='"Liberation Sans", sans-serif' font-size="16.3" fill="#f0f0f0" text-anchor="middle" >14</text>
<line x1="0" y1="523.5" x2="33" y2="523.5" stroke="#6a6a6a" stroke-width="1" />
<text x="16.5" y="517.607" font-family='"Liberation Sans", sans-serif' font-size="16.3" fill="#f0f0f0" text-anchor="middle" >15</text>
<line x1="0" y1="547.5" x2="33" y2="547.5" stroke="#6a6a6a" stroke-width="1" />
<text x="16.5" y="541.607" font-family='"Liberation Sans", sans-serif' font-size="16.3" fill="#f0f0f0" text-anchor="middle" >16</text>
<line x1="0" y1="571.5" x2="33" y2="571.5" stroke="#6a6a6a" stroke-width="1" />
<text x="16.5" y="565.607" font-family='"Liberation Sans", sans-serif' font-size="16.3" fill="#f0f0f0" text-anchor="middle" >17</text>
<line x1="0" y1="595.5" x2="33" y2="595.5" stroke="#6a6a6a" stroke-width="1" />
<text x="16.5" y="589.607" font-family='"Liberation Sans", sans-serif' font-size="16.3" fill="#f0f0f0" text-anchor="middle" >18</text>
<line x1="0" y1="619.5" x2="33" y2="619.5" stroke="#6a6a6a" stroke-width="1" />
<text x="16.5" y="613.607" font-family='"Liberation Sans", sans-serif' font-size="16.3" fill="#f0f0f0" text-anchor="middle" >19</text>
<line x1="0" y1="643.5" x2="33" y2="643.5" stroke="#6a6a6a" stroke-width="1" />
<text x="16.5" y="637.607" font-family='"Liberation Sans", sans-serif' font-size="16.3" fill="#f0f0f0" text-anchor="middle" >20</text>
<line x1="0" y1="667.5" x2="33" y2="667.5" stroke="#6a6a6a" stroke-width="1" />
<text x="16.5" y="661.607" font-family='"Liberation Sans", sans-serif' font-size="16.3" fill="#f0f0f0" text-anchor="middle" >21</text>
<line x1="0" y1="691.5" x2="33" y2="691.5" stroke="#6a6a6a" stroke-width="1" />
<text x="16.5" y="685.607" font-family='"Liberation Sans", sans-serif' font-size="16.3" fill="#f0f0f0" text-anchor="middle" >22</text>
<line x1="0" y1="715.5" x2="33" y2="715.5" stroke="#6a6a6a" stroke-width="1" />
<text x="16.5" y="709.607" font-family='"Liberation Sans", sans-serif' font-size="16.3" fill="#f0f0f0" text-anchor="middle" >23</text>
<line x1="0" y1="739.5" x2="33" y2="739.5" stroke="#6a6a6a" stroke-width="1" />
<text x="16.5" y="733.607" font-family='"Liberation Sans", sans-serif' font-size="16.3" fill="#f0f0f0" text-anchor="middle" >24</text>
<line x1="0" y1="763.5" x2="33" y2="763.5" stroke="#6a6a6a" stroke-width="1" />
<text x="16.5" y="757.607" font-family='"Liberation Sans", sans-serif' font-size="16.3" fill="#f0f0f0" text-anchor="middle" >25</text>
<line x1="0" y1="787.5" x2="33" y2="787.5" stroke="#6a6a6a" stroke-width="1" />
<text x="16.5" y="781.607" font-family='"Liberation Sans", sans-serif' font-size="16.3" fill="#f0f0f0" text-anchor="middle" >26</text>
<line x1="0" y1="811.5" x2="33" y2="811.5" stroke="#6a6a6a" stroke-width="1" />
<text x="16.5" y="805.607" font-family='"Liberation Sans", sans-serif' font-size="16.3" fill="#f0f0f0" text-anchor="middle" >27</text>
<line x1="0" y1="835.5" x2="33" y2="835.5" stroke="#6a6a6a" stroke-width="1" />
<text x="16.5" y="829.607" font-family='"Liberation Sans", sans-serif' font-size="16.3" fill="#f0f0f0" text-anchor="middle" >28</text>
<line x1="0" y1="859.5" x2="33" y2="859.5" stroke="#6a6a6a" stroke-width="1" />
<text x="16.5" y="853.607" font-family='"Liberation Sans", sans-serif' font-size="16.3" fill="#f0f0f0" text-anchor="middle" >29</text>
<line x1="0" y1="883.5" x2="33" y2="883.5" stroke="#6a6a6a" stroke-width="1" />
<text x="16.5" y="877.607" font-family='"Liberation Sans", sans-serif' font-size="16.3" fill="#f0f0f0" text-anchor="middle" >30</text>
<clipPath id="r31"><rect x="0" y="884" width="33" height="11"/></clipPath>
<text x="16.5" y="901.607" font-family='"Liberation Sans", sans-serif' font-size="16.3" fill="#f0f0f0" text-anchor="middle" clip-path="url(#r31)">31</text>
<rect x="1898" y="213" width="19" height="684" fill="#161616" rx="9.5" />
<path d="M1907.500 218.500l5.600 8h-11.200z" fill="#8e8e8e" stroke="#8e8e8e" stroke-width="1" stroke-linejoin="round"/>
<rect x="1902" y="294" width="11" height="532" fill="#979797" rx="5.5" />
<path d="M1907.500 891.500l5.600-8h-11.200z" fill="#8e8e8e" stroke="#8e8e8e" stroke-width="1" stroke-linejoin="round"/>
<path d="M39 908l-5.5 6 5.5 6" fill="none" stroke="#8c8c8c" stroke-width="1.4" stroke-linecap="round" stroke-linejoin="round"/>
<path d="M73 908l5.5 6-5.5 6" fill="none" stroke="#d8d8d8" stroke-width="1.4" stroke-linecap="round" stroke-linejoin="round"/>
<text x="152" y="920.692" font-family='"Liberation Sans", sans-serif' font-size="18" fill="#f3f3f3" textLength="82" lengthAdjust="spacingAndGlyphs" >dashboard</text>
<text x="269" y="920.692" font-family='"Liberation Sans", sans-serif' font-size="18" fill="#f3f3f3" textLength="125.5" lengthAdjust="spacingAndGlyphs" >main dashboard</text>
<text x="432" y="920.692" font-family='"Liberation Sans", sans-serif' font-size="18" fill="#f3f3f3" textLength="35.5" lengthAdjust="spacingAndGlyphs" >urug</text>
<text x="580" y="920.692" font-family='"Liberation Sans", sans-serif' font-size="18" fill="#f3f3f3" textLength="67.5" lengthAdjust="spacingAndGlyphs" >germany</text>
<text x="681" y="920.692" font-family='"Liberation Sans", sans-serif' font-size="18" fill="#f3f3f3" textLength="31.5" lengthAdjust="spacingAndGlyphs" >italy</text>
<text x="750" y="920.692" font-family='"Liberation Sans", sans-serif' font-size="18" fill="#f3f3f3" textLength="24.5" lengthAdjust="spacingAndGlyphs" >arg</text>
<text x="807" y="920.692" font-family='"Liberation Sans", sans-serif' font-size="18" fill="#f3f3f3" textLength="85.5" lengthAdjust="spacingAndGlyphs" >WorldCups</text>
<text x="500" y="917.692" font-family='"Liberation Sans", sans-serif' font-size="18" fill="#222" textLength="43" lengthAdjust="spacingAndGlyphs" >brazil</text>
<rect x="500" y="924.5" width="48" height="2.2" fill="#1d7a52" />
<line x1="251" y1="903" x2="251" y2="927" stroke="#4a4a4a" stroke-width="1" />
<line x1="416" y1="903" x2="416" y2="927" stroke="#4a4a4a" stroke-width="1" />
<line x1="484.5" y1="903" x2="484.5" y2="927" stroke="#4a4a4a" stroke-width="1" />
<line x1="563" y1="903" x2="563" y2="927" stroke="#4a4a4a" stroke-width="1" />
<line x1="664" y1="903" x2="664" y2="927" stroke="#4a4a4a" stroke-width="1" />
<line x1="733" y1="903" x2="733" y2="927" stroke="#4a4a4a" stroke-width="1" />
<line x1="790" y1="903" x2="790" y2="927" stroke="#4a4a4a" stroke-width="1" />
<line x1="909" y1="903" x2="909" y2="927" stroke="#4a4a4a" stroke-width="1" />
<clipPath id="wcp"><rect x="920" y="896" width="137" height="35"/></clipPath>
<text x="926" y="920.692" font-family='"Liberation Sans", sans-serif' font-size="18" fill="#f3f3f3" textLength="134" lengthAdjust="spacingAndGlyphs" clip-path="url(#wcp)">WorldCupPlayers</text>
<circle cx="1070.3" cy="914" r="1.7" fill="#d8d8d8" />
<circle cx="1075.3" cy="914" r="1.7" fill="#d8d8d8" />
<circle cx="1080.3" cy="914" r="1.7" fill="#d8d8d8" />
<path d="M1108 914.200h14.500M1115.300 907v14.300" fill="none" stroke="#e6e6e6" stroke-width="1.5" />
<rect x="1154.2" y="910" width="3" height="3" fill="#d8d8d8" rx="0.5" />
<rect x="1154.2" y="914.5" width="3" height="3" fill="#d8d8d8" rx="0.5" />
<rect x="1154.2" y="919" width="3" height="3" fill="#d8d8d8" rx="0.5" />
<rect x="1177.5" y="904" width="719" height="24" fill="#161616" rx="11" />
<path d="M1182.500 914.500l7.600-5.300v10.600z" fill="#8e8e8e" stroke="#8e8e8e" stroke-width="1" stroke-linejoin="round"/>
<rect x="1197" y="909" width="656" height="11" fill="#979797" rx="5.5" />
<path d="M1890.500 914.500l-7.600-5.300v10.600z" fill="#8e8e8e" stroke="#8e8e8e" stroke-width="1" stroke-linejoin="round"/>
<line x1="148.5" y1="46" x2="148.5" y2="157" stroke="#4d4d4d" stroke-width="1" />
<line x1="440.5" y1="46" x2="440.5" y2="157" stroke="#4d4d4d" stroke-width="1" />
<line x1="856.5" y1="46" x2="856.5" y2="157" stroke="#4d4d4d" stroke-width="1" />
<line x1="1056.5" y1="46" x2="1056.5" y2="157" stroke="#4d4d4d" stroke-width="1" />
<line x1="1302.5" y1="46" x2="1302.5" y2="157" stroke="#4d4d4d" stroke-width="1" />
<line x1="1483.5" y1="46" x2="1483.5" y2="157" stroke="#4d4d4d" stroke-width="1" />
<line x1="1680.5" y1="46" x2="1680.5" y2="157" stroke="#4d4d4d" stroke-width="1" />
<line x1="1758.5" y1="46" x2="1758.5" y2="157" stroke="#4d4d4d" stroke-width="1" />
<line x1="1836.5" y1="46" x2="1836.5" y2="157" stroke="#4d4d4d" stroke-width="1" />
<path d="M43.500 56.700H38.600V84.200H53.500" fill="none" stroke="#eaa43a" stroke-width="3.6" stroke-linejoin="miter"/>
<path d="M59 56.700H61.900V64.800" fill="none" stroke="#eaa43a" stroke-width="3.6" />
<path d="M42.600 59.800v-4.600h3.900a3.800 3.800 0 0 1 7.400 0h6.200v4.600z" fill="#292929" stroke="#bdbdbd" stroke-width="1.4" stroke-linejoin="round"/>
<rect x="54.2" y="65.7" width="16.3" height="21.3" fill="#333333" stroke="#d2d2d2" stroke-width="1.5" />
<text x="34" y="107.763" font-family='"Liberation Sans", sans-serif' font-size="15.3" fill="#ffffff" textLength="33.5" lengthAdjust="spacingAndGlyphs" >Paste</text>
<path d="M46.4 119.5L50 123.5L53.6 119.5" fill="none" stroke="#e6e6e6" stroke-width="1.4" stroke-linecap="round" stroke-linejoin="round"/>
<path d="M90 49.800l8 13.800M98 49.800l-8 13.800" fill="none" stroke="#cfcfcf" stroke-width="1.3" stroke-linecap="round" stroke-linejoin="round"/>
<circle cx="90.4" cy="66.5" r="2.3" fill="none" stroke="#3f9be6" stroke-width="1.4" />
<circle cx="97.6" cy="66.5" r="2.3" fill="none" stroke="#3f9be6" stroke-width="1.4" />
<path d="M91.500 84v-2.600h-7.300v16.800h6.200" fill="none" stroke="#c8c8c8" stroke-width="1.3" stroke-linejoin="round"/>
<path d="M91.800 85.200h7.500l4.500 4.600v10.500h-12z" fill="#292929" stroke="#c8c8c8" stroke-width="1.3" stroke-linejoin="round"/>
<path d="M99 85.500v4.600h4.600" fill="none" stroke="#c8c8c8" stroke-width="1.1" />
<path d="M95 93.700h5.800M95 96.400h5.800" fill="none" stroke="#c8c8c8" stroke-width="1.2" />
<path d="M119.7 89.5L123.3 93.5L126.9 89.5" fill="none" stroke="#e6e6e6" stroke-width="1.4" stroke-linecap="round" stroke-linejoin="round"/>
<path d="M99.500 120.600l4.200-6.300 2.300 1.600-4 6.400" fill="#292929" stroke="#e6e6e6" stroke-width="1.3" stroke-linecap="round" stroke-linejoin="round"/>
<path d="M92.500 121.300l4.300-2.800 6.200 4.400-2.300 4.400z" fill="#292929" stroke="#e6e6e6" stroke-width="1.3" stroke-linecap="round" stroke-linejoin="round"/>
<path d="M84.500 122l8.500-.5 7.500 5.500-6.300 4.300c-4-1.800-7.200-5-9.700-9.300z" fill="#292929" stroke="#f0c24a" stroke-width="1.3" stroke-linecap="round" stroke-linejoin="round"/>
<path d="M88.300 125l9.300 3.300-3.500 2.500c-2.300-1.200-4.200-3.200-5.800-5.800z" fill="#f0b43a" />
<text x="42.5" y="156.478" font-family='"Liberation Sans", sans-serif' font-size="13.6" fill="#ffffff" textLength="57" lengthAdjust="spacingAndGlyphs" >Clipboard</text>
<path d="M143.5 148H134.5V157" fill="none" stroke="#d0d0d0" stroke-width="1.2" />
<path d="M138 151.5L144 157.5M139.5 157.5H144V153" fill="none" stroke="#d0d0d0" stroke-width="1.2" />
<text x="162.5" y="74.7632" font-family='"Liberation Sans", sans-serif' font-size="15.3" fill="#ffffff" textLength="42" lengthAdjust="spacingAndGlyphs" >Calibri</text>
<path d="M290.4 68L294 72L297.6 68" fill="none" stroke="#e6e6e6" stroke-width="1.4" stroke-linecap="round" stroke-linejoin="round"/>
<text x="307.5" y="74.7632" font-family='"Liberation Sans", sans-serif' font-size="15.3" fill="#ffffff" textLength="14.5" lengthAdjust="spacingAndGlyphs" >11</text>
<path d="M355.4 68L359 72L362.6 68" fill="none" stroke="#e6e6e6" stroke-width="1.4" stroke-linecap="round" stroke-linejoin="round"/>
<text x="375" y="74.896" font-family='"Liberation Sans", sans-serif' font-size="21.5" fill="#e8e8e8" textLength="14" lengthAdjust="spacingAndGlyphs" >A</text>
<path d="M388 64l3-3 3 3" fill="none" stroke="#4ea3e8" stroke-width="1.3" stroke-linecap="round" stroke-linejoin="round"/>
<text x="409" y="75.02" font-family='"Liberation Sans", sans-serif' font-size="17.5" fill="#e8e8e8" textLength="11.5" lengthAdjust="spacingAndGlyphs" >A</text>
<path d="M420 60.5l3 3 3-3" fill="none" stroke="#4ea3e8" stroke-width="1.3" stroke-linecap="round" stroke-linejoin="round"/>
<text x="169" y="113.52" font-family='"Liberation Sans", sans-serif' font-size="17.5" fill="#e8e8e8" font-weight="700" textLength="10.5" lengthAdjust="spacingAndGlyphs" >B</text>
<text x="202" y="113.692" font-family='"Liberation Serif", serif' font-size="18" fill="#e8e8e8" font-style="italic" textLength="7" lengthAdjust="spacingAndGlyphs" >I</text>
<text x="232" y="112.004" font-family='"Liberation Sans", sans-serif' font-size="16" fill="#e8e8e8" textLength="10" lengthAdjust="spacingAndGlyphs" >U</text>
<line x1="231.5" y1="116" x2="242.5" y2="116" stroke="#e8e8e8" stroke-width="1.3" />
<path d="M257.4 107.5L261 111.5L264.6 107.5" fill="none" stroke="#e6e6e6" stroke-width="1.4" stroke-linecap="round" stroke-linejoin="round"/>
<line x1="274.5" y1="94" x2="274.5" y2="124" stroke="#4d4d4d" stroke-width="1" />
<line x1="282" y1="99.5" x2="301" y2="99.5" stroke="#c8c8c8" stroke-width="1.2" stroke-dasharray="1.4 1.4"/>
<line x1="282" y1="108.5" x2="301" y2="108.5" stroke="#c8c8c8" stroke-width="1.2" stroke-dasharray="1.4 1.4"/>
<line x1="282.5" y1="99" x2="282.5" y2="116" stroke="#c8c8c8" stroke-width="1.2" stroke-dasharray="1.4 1.4"/>
<line x1="291.5" y1="99" x2="291.5" y2="116" stroke="#c8c8c8" stroke-width="1.2" stroke-dasharray="1.4 1.4"/>
<line x1="300.5" y1="99" x2="300.5" y2="116" stroke="#c8c8c8" stroke-width="1.2" stroke-dasharray="1.4 1.4"/>
<line x1="281.5" y1="117" x2="301.5" y2="117" stroke="#e0e0e0" stroke-width="1.6" />
<path d="M311.4 107.5L315 111.5L318.6 107.5" fill="none" stroke="#e6e6e6" stroke-width="1.4" stroke-linecap="round" stroke-linejoin="round"/>
<line x1="328.5" y1="94" x2="328.5" y2="124" stroke="#4d4d4d" stroke-width="1" />
<path d="M343.5 101.5l-4.3 5 5.8 5.3 6.4-5.9-6.2-6.2-1.7 1.8z" fill="none" stroke="#e0e0e0" stroke-width="1.2" stroke-linecap="round" stroke-linejoin="round"/>
<path d="M345.2 99.7v4.6" fill="none" stroke="#e0e0e0" stroke-width="1.1" />
<path d="M352.2 105c1.8 1.6 2.6 3.2 2.4 5" fill="none" stroke="#4ea3e8" stroke-width="1.3" stroke-linecap="round" stroke-linejoin="round"/>
<rect x="336" y="114" width="20" height="5" fill="#ffeb00" />
<path d="M365.4 107.5L369 111.5L372.6 107.5" fill="none" stroke="#e6e6e6" stroke-width="1.4" stroke-linecap="round" stroke-linejoin="round"/>
<text x="391" y="112.32" font-family='"Liberation Sans", sans-serif' font-size="17.5" fill="#e8e8e8" textLength="11.5" lengthAdjust="spacingAndGlyphs" >A</text>
<rect x="387" y="114" width="20" height="5" fill="#e81123" />
<path d="M416.4 107.5L420 111.5L423.6 107.5" fill="none" stroke="#e6e6e6" stroke-width="1.4" stroke-linecap="round" stroke-linejoin="round"/>
<text x="271.5" y="156.478" font-family='"Liberation Sans", sans-serif' font-size="13.6" fill="#ffffff" textLength="24.5" lengthAdjust="spacingAndGlyphs" >Font</text>
<path d="M435 148H426V157" fill="none" stroke="#d0d0d0" stroke-width="1.2" />
<path d="M429.5 151.5L435.5 157.5M431 157.5H435.5V153" fill="none" stroke="#d0d0d0" stroke-width="1.2" />
<line x1="457" y1="59.5" x2="475" y2="59.5" stroke="#d6d6d6" stroke-width="1.3" />
<line x1="460" y1="65" x2="472" y2="65" stroke="#d6d6d6" stroke-width="1.3" />
<line x1="457" y1="70.5" x2="475" y2="70.5" stroke="#d6d6d6" stroke-width="1.3" />
<line x1="489" y1="62.5" x2="507" y2="62.5" stroke="#d6d6d6" stroke-width="1.3" />
<line x1="492" y1="68" x2="504" y2="68" stroke="#d6d6d6" stroke-width="1.3" />
<line x1="489" y1="73.5" x2="507" y2="73.5" stroke="#d6d6d6" stroke-width="1.3" />
<line x1="521" y1="67" x2="539" y2="67" stroke="#d6d6d6" stroke-width="1.3" />
<line x1="524" y1="72.5" x2="536" y2="72.5" stroke="#d6d6d6" stroke-width="1.3" />
<line x1="521" y1="78" x2="539" y2="78" stroke="#d6d6d6" stroke-width="1.3" />
<line x1="547.5" y1="54" x2="547.5" y2="84" stroke="#4d4d4d" stroke-width="1" />
<text x="0" y="0" font-family='"Liberation Sans", sans-serif' font-size="13" fill="#d6d6d6" transform="translate(558 72.500) rotate(-42)">ab</text>
<path d="M562 76.5l12-12M568.5 64h5.8v5.8" fill="none" stroke="#3a96dd" stroke-width="1.4" stroke-linecap="round" stroke-linejoin="round"/>
<path d="M582.4 68L586 72L589.6 68" fill="none" stroke="#e6e6e6" stroke-width="1.4" stroke-linecap="round" stroke-linejoin="round"/>
<line x1="602.5" y1="54" x2="602.5" y2="84" stroke="#4d4d4d" stroke-width="1" />
<path d="M613 65.5l3.6 3.6-3.6 3.6" fill="none" stroke="#3a96dd" stroke-width="1.4" stroke-linecap="round" stroke-linejoin="round"/>
<path d="M624.2 74v-10.5M627 74v-10.5M627.6 63.2h-4.4a2.9 2.9 0 0 0 0 5.8h1" fill="none" stroke="#d6d6d6" stroke-width="1.3" />
<path d="M623.2 63.2a2.9 2.9 0 0 0 0 5.8h1v-5.8z" fill="#d6d6d6" />
<path d="M639.4 68L643 72L646.6 68" fill="none" stroke="#e6e6e6" stroke-width="1.4" stroke-linecap="round" stroke-linejoin="round"/>
<line x1="457" y1="100.5" x2="475" y2="100.5" stroke="#d6d6d6" stroke-width="1.3" />
<line x1="489" y1="100.5" x2="507" y2="100.5" stroke="#d6d6d6" stroke-width="1.3" />
<line x1="521" y1="100.5" x2="539" y2="100.5" stroke="#d6d6d6" stroke-width="1.3" />
<line x1="457" y1="105.5" x2="469" y2="105.5" stroke="#d6d6d6" stroke-width="1.3" />
<line x1="492" y1="105.5" x2="504" y2="105.5" stroke="#d6d6d6" stroke-width="1.3" />
<line x1="527" y1="105.5" x2="539" y2="105.5" stroke="#d6d6d6" stroke-width="1.3" />
<line x1="457" y1="110.5" x2="475" y2="110.5" stroke="#d6d6d6" stroke-width="1.3" />
<line x1="489" y1="110.5" x2="507" y2="110.5" stroke="#d6d6d6" stroke-width="1.3" />
<line x1="521" y1="110.5" x2="539" y2="110.5" stroke="#d6d6d6" stroke-width="1.3" />
<line x1="457" y1="115.5" x2="469" y2="115.5" stroke="#d6d6d6" stroke-width="1.3" />
<line x1="492" y1="115.5" x2="504" y2="115.5" stroke="#d6d6d6" stroke-width="1.3" />
<line x1="527" y1="115.5" x2="539" y2="115.5" stroke="#d6d6d6" stroke-width="1.3" />
<line x1="547.5" y1="94" x2="547.5" y2="124" stroke="#4d4d4d" stroke-width="1" />
<line x1="556" y1="100.5" x2="574" y2="100.5" stroke="#d6d6d6" stroke-width="1.3" />
<line x1="556" y1="115.5" x2="574" y2="115.5" stroke="#d6d6d6" stroke-width="1.3" />
<line x1="565" y1="105.5" x2="574" y2="105.5" stroke="#d6d6d6" stroke-width="1.3" />
<line x1="565" y1="110.5" x2="574" y2="110.5" stroke="#d6d6d6" stroke-width="1.3" />
<path d="M563 108H556.5M559.3 105.2l-2.8 2.8 2.8 2.8" fill="none" stroke="#3a96dd" stroke-width="1.3" stroke-linecap="round" stroke-linejoin="round"/>
<line x1="588" y1="100.5" x2="606" y2="100.5" stroke="#d6d6d6" stroke-width="1.3" />
<line x1="588" y1="115.5" x2="606" y2="115.5" stroke="#d6d6d6" stroke-width="1.3" />
<line x1="597" y1="105.5" x2="606" y2="105.5" stroke="#d6d6d6" stroke-width="1.3" />
<line x1="597" y1="110.5" x2="606" y2="110.5" stroke="#d6d6d6" stroke-width="1.3" />
<path d="M588 108H594.5M591.7 105.2l2.8 2.8-2.8 2.8" fill="none" stroke="#3a96dd" stroke-width="1.3" stroke-linecap="round" stroke-linejoin="round"/>
<line x1="661.5" y1="54" x2="661.5" y2="130" stroke="#4d4d4d" stroke-width="1" />
<text x="676.5" y="67" font-family='"Liberation Sans", sans-serif' font-size="11.5" fill="#d6d6d6" textLength="12.5" lengthAdjust="spacingAndGlyphs" >ab</text>
<text x="677" y="77" font-family='"Liberation Sans", sans-serif' font-size="11.5" fill="#d6d6d6" >c</text>
<path d="M684.5 74h6.5a2.8 2.8 0 0 0 0-5.6h-1.2" fill="none" stroke="#3a96dd" stroke-width="1.3" stroke-linecap="round" stroke-linejoin="round"/>
<path d="M687.3 71.3l-2.8 2.7 2.8 2.7" fill="none" stroke="#3a96dd" stroke-width="1.3" stroke-linecap="round" stroke-linejoin="round"/>
<text x="699" y="74.7632" font-family='"Liberation Sans", sans-serif' font-size="15.3" fill="#ffffff" textLength="67" lengthAdjust="spacingAndGlyphs" >Wrap Text</text>
<rect x="674.5" y="99.5" width="18" height="17" fill="none" stroke="#c8c8c8" stroke-width="1.3" />
<line x1="674.5" y1="103" x2="692.5" y2="103" stroke="#c8c8c8" stroke-width="1.1" />
<line x1="674.5" y1="113" x2="692.5" y2="113" stroke="#c8c8c8" stroke-width="1.1" />
<line x1="683.5" y1="99.5" x2="683.5" y2="103" stroke="#c8c8c8" stroke-width="1.1" />
<line x1="683.5" y1="113" x2="683.5" y2="116.5" stroke="#c8c8c8" stroke-width="1.1" />
<path d="M678 108h11M680.3 105.7l-2.3 2.3 2.3 2.3M686.7 105.7l2.3 2.3-2.3 2.3" fill="none" stroke="#3a96dd" stroke-width="1.2" stroke-linecap="round" stroke-linejoin="round"/>
<text x="699" y="114.763" font-family='"Liberation Sans", sans-serif' font-size="15.3" fill="#ffffff" textLength="105.5" lengthAdjust="spacingAndGlyphs" >Merge &amp; Center</text>
<path d="M827.4 107.5L831 111.5L834.6 107.5" fill="none" stroke="#e6e6e6" stroke-width="1.4" stroke-linecap="round" stroke-linejoin="round"/>
<text x="609" y="156.478" font-family='"Liberation Sans", sans-serif' font-size="13.6" fill="#ffffff" textLength="58" lengthAdjust="spacingAndGlyphs" >Alignment</text>
<path d="M851 148H842V157" fill="none" stroke="#d0d0d0" stroke-width="1.2" />
<path d="M845.5 151.5L851.5 157.5M847 157.5H851.5V153" fill="none" stroke="#d0d0d0" stroke-width="1.2" />
<text x="870" y="74.7632" font-family='"Liberation Sans", sans-serif' font-size="15.3" fill="#ffffff" textLength="51" lengthAdjust="spacingAndGlyphs" >General</text>
<path d="M1035.4 68L1039 72L1042.6 68" fill="none" stroke="#e6e6e6" stroke-width="1.4" stroke-linecap="round" stroke-linejoin="round"/>
<text x="876" y="116.036" font-family='"Liberation Sans", sans-serif' font-size="19" fill="#e0e0e0" textLength="10" lengthAdjust="spacingAndGlyphs" >$</text>
<path d="M901.4 107.5L905 111.5L908.6 107.5" fill="none" stroke="#e6e6e6" stroke-width="1.4" stroke-linecap="round" stroke-linejoin="round"/>
<text x="923" y="116.036" font-family='"Liberation Sans", sans-serif' font-size="19" fill="#e0e0e0" textLength="19" lengthAdjust="spacingAndGlyphs" >%</text>
<text x="959.5" y="107" font-family='"Liberation Serif", serif' font-size="50" fill="#e0e0e0" font-weight="700" textLength="11" lengthAdjust="spacingAndGlyphs" >,</text>
<line x1="982.5" y1="94" x2="982.5" y2="124" stroke="#4d4d4d" stroke-width="1" />
<path d="M998.5 105h-7.5M994 102l-3 3 3 3" fill="none" stroke="#3a96dd" stroke-width="1.3" stroke-linecap="round" stroke-linejoin="round"/>
<text x="1000.5" y="108.5" font-family='"Liberation Sans", sans-serif' font-size="10.5" fill="#d8d8d8" textLength="9" lengthAdjust="spacingAndGlyphs" >.0</text>
<text x="993.5" y="118.5" font-family='"Liberation Sans", sans-serif' font-size="10.5" fill="#d8d8d8" textLength="15.5" lengthAdjust="spacingAndGlyphs" >.00</text>
<text x="1025.5" y="108.5" font-family='"Liberation Sans", sans-serif' font-size="10.5" fill="#d8d8d8" textLength="15.5" lengthAdjust="spacingAndGlyphs" >.00</text>
<path d="M1022.5 113.5h7.5M1027 110.5l3 3-3 3" fill="none" stroke="#3a96dd" stroke-width="1.3" stroke-linecap="round" stroke-linejoin="round"/>
<text x="1032.5" y="118.5" font-family='"Liberation Sans", sans-serif' font-size="10.5" fill="#d8d8d8" textLength="9" lengthAdjust="spacingAndGlyphs" >.0</text>
<text x="922.5" y="156.478" font-family='"Liberation Sans", sans-serif' font-size="13.6" fill="#ffffff" textLength="47" lengthAdjust="spacingAndGlyphs" >Number</text>
<path d="M1050.5 148H1041.5V157" fill="none" stroke="#d0d0d0" stroke-width="1.2" />
<path d="M1045 151.5L1051 157.5M1046.5 157.5H1051V153" fill="none" stroke="#d0d0d0" stroke-width="1.2" />
<rect x="1095.5" y="54.5" width="35" height="27" fill="none" stroke="#c8c8c8" stroke-width="1.3" />
<line x1="1104.25" y1="54.5" x2="1104.25" y2="81.5" stroke="#c8c8c8" stroke-width="1.3" />
<line x1="1113" y1="54.5" x2="1113" y2="81.5" stroke="#c8c8c8" stroke-width="1.3" />
<line x1="1121.75" y1="54.5" x2="1121.75" y2="81.5" stroke="#c8c8c8" stroke-width="1.3" />
<line x1="1095.5" y1="63.5" x2="1130.5" y2="63.5" stroke="#c8c8c8" stroke-width="1.3" />
<line x1="1095.5" y1="72.5" x2="1130.5" y2="72.5" stroke="#c8c8c8" stroke-width="1.3" />
<rect x="1101.5" y="55.5" width="16" height="8" fill="#e32525" />
<rect x="1101.5" y="73" width="16" height="8" fill="#e32525" />
<rect x="1108" y="64.3" width="15" height="8" fill="#e32525" />
<rect x="1101.5" y="64.3" width="6.5" height="8" fill="#1f7fd6" />
<text x="1074.5" y="106.263" font-family='"Liberation Sans", sans-serif' font-size="15.3" fill="#ffffff" textLength="76.5" lengthAdjust="spacingAndGlyphs" >Conditional</text>
<text x="1070" y="126.263" font-family='"Liberation Sans", sans-serif' font-size="15.3" fill="#ffffff" textLength="72.5" lengthAdjust="spacingAndGlyphs" >Formatting</text>
<path d="M1147.8 118.7L1151 122.3L1154.2 118.7" fill="none" stroke="#e6e6e6" stroke-width="1.4" stroke-linecap="round" stroke-linejoin="round"/>
<rect x="1179.5" y="54.5" width="35" height="27" fill="none" stroke="#c8c8c8" stroke-width="1.3" />
<line x1="1191.17" y1="54.5" x2="1191.17" y2="81.5" stroke="#c8c8c8" stroke-width="1.3" />
<line x1="1202.83" y1="54.5" x2="1202.83" y2="81.5" stroke="#c8c8c8" stroke-width="1.3" />
<line x1="1179.5" y1="63.5" x2="1214.5" y2="63.5" stroke="#c8c8c8" stroke-width="1.3" />
<line x1="1179.5" y1="72.5" x2="1214.5" y2="72.5" stroke="#c8c8c8" stroke-width="1.3" />
<rect x="1192" y="64.3" width="22" height="17" fill="#1f7fd6" />
<line x1="1202.8" y1="64" x2="1202.8" y2="81.5" stroke="#5aa9ee" stroke-width="1" />
<line x1="1192" y1="73" x2="1214" y2="73" stroke="#5aa9ee" stroke-width="1" />
<path d="M1203 80L1215 66" fill="none" stroke="#292929" stroke-width="5.5" stroke-linecap="round" stroke-linejoin="round"/>
<path d="M1203 80L1215 66" fill="none" stroke="#d8d8d8" stroke-width="3" stroke-linecap="round" stroke-linejoin="round"/>
<path d="M1195 88c3.5-.3 5.5-1.2 7.4-3.2 2.2-2.3 2.6-5 .6-6.9-2-1.8-4.9-1.2-6.4 1.2-1.4 2.3-.2 6.4-1.6 8.9z" fill="#3a96dd" stroke="#292929" stroke-width="0.8" />
<text x="1165" y="106.263" font-family='"Liberation Sans", sans-serif' font-size="15.3" fill="#ffffff" textLength="64.5" lengthAdjust="spacingAndGlyphs" >Format as</text>
<text x="1174" y="126.263" font-family='"Liberation Sans", sans-serif' font-size="15.3" fill="#ffffff" textLength="33.5" lengthAdjust="spacingAndGlyphs" >Table</text>
<path d="M1212.8 118.7L1216 122.3L1219.2 118.7" fill="none" stroke="#e6e6e6" stroke-width="1.4" stroke-linecap="round" stroke-linejoin="round"/>
<rect x="1246.5" y="54.5" width="35" height="27" fill="none" stroke="#c8c8c8" stroke-width="1.3" />
<line x1="1246.5" y1="59.5" x2="1281.5" y2="59.5" stroke="#c8c8c8" stroke-width="1.2" />
<line x1="1252.5" y1="54.5" x2="1252.5" y2="81.5" stroke="#c8c8c8" stroke-width="1.2" />
<line x1="1275.5" y1="54.5" x2="1275.5" y2="81.5" stroke="#c8c8c8" stroke-width="1.2" />
<rect x="1253.3" y="60.3" width="21.5" height="16" fill="#1f7fd6" />
<path d="M1269 80L1281 66" fill="none" stroke="#292929" stroke-width="5.5" stroke-linecap="round" stroke-linejoin="round"/>
<path d="M1269 80L1281 66" fill="none" stroke="#d8d8d8" stroke-width="3" stroke-linecap="round" stroke-linejoin="round"/>
<path d="M1261 88c3.5-.3 5.5-1.2 7.4-3.2 2.2-2.3 2.6-5 .6-6.9-2-1.8-4.9-1.2-6.4 1.2-1.4 2.3-.2 6.4-1.6 8.9z" fill="#3a96dd" stroke="#292929" stroke-width="0.8" />
<text x="1251" y="106.263" font-family='"Liberation Sans", sans-serif' font-size="15.3" fill="#ffffff" textLength="24.5" lengthAdjust="spacingAndGlyphs" >Cell</text>
<text x="1238" y="126.263" font-family='"Liberation Sans", sans-serif' font-size="15.3" fill="#ffffff" textLength="38" lengthAdjust="spacingAndGlyphs" >Styles</text>
<path d="M1280.8 118.7L1284 122.3L1287.2 118.7" fill="none" stroke="#e6e6e6" stroke-width="1.4" stroke-linecap="round" stroke-linejoin="round"/>
<text x="1162" y="157.178" font-family='"Liberation Sans", sans-serif' font-size="13.6" fill="#ffffff" textLength="32.5" lengthAdjust="spacingAndGlyphs" >Styles</text>
<rect x="1321.5" y="54.5" width="35" height="27" fill="none" stroke="#c8c8c8" stroke-width="1.3" />
<line x1="1333.17" y1="54.5" x2="1333.17" y2="81.5" stroke="#c8c8c8" stroke-width="1.3" />
<line x1="1344.83" y1="54.5" x2="1344.83" y2="81.5" stroke="#c8c8c8" stroke-width="1.3" />
<line x1="1321.5" y1="63.5" x2="1356.5" y2="63.5" stroke="#c8c8c8" stroke-width="1.3" />
<line x1="1321.5" y1="72.5" x2="1356.5" y2="72.5" stroke="#c8c8c8" stroke-width="1.3" />
<rect x="1329" y="63.5" width="29" height="9.5" fill="#1f7fd6" />
<line x1="1345" y1="63.5" x2="1345" y2="73" stroke="#292929" stroke-width="1" />
<path d="M1336 68.2h-16M1325.5 62.5l-6 5.7 6 5.7" fill="none" stroke="#4ea3e8" stroke-width="1.5" stroke-linecap="round" stroke-linejoin="round"/>
<text x="1321" y="107.763" font-family='"Liberation Sans", sans-serif' font-size="15.3" fill="#ffffff" textLength="36" lengthAdjust="spacingAndGlyphs" >Insert</text>
<path d="M1334.9 119.5L1338.5 123.5L1342.1 119.5" fill="none" stroke="#e6e6e6" stroke-width="1.4" stroke-linecap="round" stroke-linejoin="round"/>
<rect x="1375.5" y="54.5" width="35" height="27" fill="none" stroke="#c8c8c8" stroke-width="1.3" />
<line x1="1387.17" y1="54.5" x2="1387.17" y2="81.5" stroke="#c8c8c8" stroke-width="1.3" />
<line x1="1398.83" y1="54.5" x2="1398.83" y2="81.5" stroke="#c8c8c8" stroke-width="1.3" />
<line x1="1375.5" y1="63.5" x2="1410.5" y2="63.5" stroke="#c8c8c8" stroke-width="1.3" />
<line x1="1375.5" y1="72.5" x2="1410.5" y2="72.5" stroke="#c8c8c8" stroke-width="1.3" />
<rect x="1375" y="63" width="28" height="10.5" fill="#292929" />
<rect x="1379.5" y="64" width="17" height="8.5" fill="#1f7fd6" />
<line x1="1388" y1="64" x2="1388" y2="72.5" stroke="#5aa9ee" stroke-width="1" />
<path d="M1400 62l11 12M1411 62l-11 12" fill="none" stroke="#ef4b4b" stroke-width="1.4" stroke-linecap="round" stroke-linejoin="round"/>
<text x="1371" y="107.763" font-family='"Liberation Sans", sans-serif' font-size="15.3" fill="#ffffff" textLength="43.5" lengthAdjust="spacingAndGlyphs" >Delete</text>
<path d="M1388.9 119.5L1392.5 123.5L1396.1 119.5" fill="none" stroke="#e6e6e6" stroke-width="1.4" stroke-linecap="round" stroke-linejoin="round"/>
<rect x="1429.5" y="54.5" width="35" height="27" fill="none" stroke="#c8c8c8" stroke-width="1.3" />
<line x1="1441.17" y1="54.5" x2="1441.17" y2="81.5" stroke="#c8c8c8" stroke-width="1.3" />
<line x1="1452.83" y1="54.5" x2="1452.83" y2="81.5" stroke="#c8c8c8" stroke-width="1.3" />
<line x1="1429.5" y1="63.5" x2="1464.5" y2="63.5" stroke="#c8c8c8" stroke-width="1.3" />
<line x1="1429.5" y1="72.5" x2="1464.5" y2="72.5" stroke="#c8c8c8" stroke-width="1.3" />
<rect x="1437" y="63.8" width="15.5" height="9" fill="#1f7fd6" />
<path d="M1437.5 49.5h19M1437.5 47.5v4M1456.5 47.5v4" fill="none" stroke="#3a96dd" stroke-width="1.2" />
<text x="1424" y="106.263" font-family='"Liberation Sans", sans-serif' font-size="15.3" fill="#ffffff" textLength="47" lengthAdjust="spacingAndGlyphs" >Format</text>
<path d="M1442.9 117.5L1446.5 121.5L1450.1 117.5" fill="none" stroke="#e6e6e6" stroke-width="1.4" stroke-linecap="round" stroke-linejoin="round"/>
<text x="1379" y="157.178" font-family='"Liberation Sans", sans-serif' font-size="13.6" fill="#ffffff" textLength="26.5" lengthAdjust="spacingAndGlyphs" >Cells</text>
<path d="M1516.5 53v-2.5h-14.5l7.5 8.3-7.5 8.4h14.5v-2.5" fill="none" stroke="#e0e0e0" stroke-width="1.4" stroke-linejoin="miter"/>
<path d="M1534.9 57.5L1538.5 61.5L1542.1 57.5" fill="none" stroke="#e6e6e6" stroke-width="1.4" stroke-linecap="round" stroke-linejoin="round"/>
<rect x="1499.5" y="83" width="19" height="16.5" fill="none" stroke="#c8c8c8" stroke-width="1.3" />
<line x1="1499.5" y1="86.5" x2="1518.5" y2="86.5" stroke="#c8c8c8" stroke-width="1.3" />
<path d="M1509 89v7.5M1506 93.8l3 3 3-3" fill="none" stroke="#3a96dd" stroke-width="1.3" stroke-linecap="round" stroke-linejoin="round"/>
<path d="M1526.9 89.5L1530.5 93.5L1534.1 89.5" fill="none" stroke="#e6e6e6" stroke-width="1.4" stroke-linecap="round" stroke-linejoin="round"/>
<path d="M1511 114.5l7.5 7-9.5 10.5-8.5-7.5z" fill="none" stroke="#c77dd1" stroke-width="1.4" stroke-linejoin="round"/>
<path d="M1504.5 120.5l8.5 7.5-4 4-8.5-7.5z" fill="#b65fc2" />
<path d="M1526.9 121.5L1530.5 125.5L1534.1 121.5" fill="none" stroke="#e6e6e6" stroke-width="1.4" stroke-linecap="round" stroke-linejoin="round"/>
<text x="1563.5" y="66.5" font-family='"Liberation Sans", sans-serif' font-size="18.5" fill="#3a96dd" textLength="12" lengthAdjust="spacingAndGlyphs" >A</text>
<text x="1564.5" y="85" font-family='"Liberation Sans", sans-serif' font-size="18.5" fill="#d8d8d8" textLength="10.5" lengthAdjust="spacingAndGlyphs" >Z</text>
<path d="M1579.5 60h20l-7.5 8.5v9.5h-5v-9.5z" fill="none" stroke="#d8d8d8" stroke-width="1.3" stroke-linejoin="round"/>
<text x="1561" y="106.263" font-family='"Liberation Sans", sans-serif' font-size="15.3" fill="#ffffff" textLength="42" lengthAdjust="spacingAndGlyphs" >Sort &amp;</text>
<text x="1559" y="126.263" font-family='"Liberation Sans", sans-serif' font-size="15.3" fill="#ffffff" textLength="33" lengthAdjust="spacingAndGlyphs" >Filter</text>
<path d="M1597.3 118.7L1600.5 122.3L1603.7 118.7" fill="none" stroke="#e6e6e6" stroke-width="1.4" stroke-linecap="round" stroke-linejoin="round"/>
<circle cx="1645.5" cy="63.5" r="12.5" fill="none" stroke="#d8d8d8" stroke-width="1.4" />
<path d="M1636.5 72.5l-13.5 13.5" fill="none" stroke="#d8d8d8" stroke-width="1.5" stroke-linecap="round" stroke-linejoin="round"/>
<text x="1619" y="106.263" font-family='"Liberation Sans", sans-serif' font-size="15.3" fill="#ffffff" textLength="43.5" lengthAdjust="spacingAndGlyphs" >Find &amp;</text>
<text x="1614" y="126.263" font-family='"Liberation Sans", sans-serif' font-size="15.3" fill="#ffffff" textLength="40" lengthAdjust="spacingAndGlyphs" >Select</text>
<path d="M1659.3 118.7L1662.5 122.3L1665.7 118.7" fill="none" stroke="#e6e6e6" stroke-width="1.4" stroke-linecap="round" stroke-linejoin="round"/>
<text x="1561" y="157.178" font-family='"Liberation Sans", sans-serif' font-size="13.6" fill="#ffffff" textLength="40" lengthAdjust="spacingAndGlyphs" >Editing</text>
<rect x="1702" y="51" width="35" height="34.5" fill="none" stroke="#d4531f" stroke-width="2" />
<rect x="1706.5" y="55.5" width="11" height="11" fill="none" stroke="#d4531f" stroke-width="1.4" />
<rect x="1721.5" y="55.5" width="11" height="11" fill="none" stroke="#d4531f" stroke-width="1.4" />
<rect x="1706.5" y="70" width="11" height="11" fill="none" stroke="#d4531f" stroke-width="1.4" />
<rect x="1721.5" y="70" width="11" height="11" fill="none" stroke="#d4531f" stroke-width="1.4" />
<text x="1694" y="106.263" font-family='"Liberation Sans", sans-serif' font-size="15.3" fill="#ffffff" textLength="52" lengthAdjust="spacingAndGlyphs" >Add-ins</text>
<text x="1695.5" y="157.178" font-family='"Liberation Sans", sans-serif' font-size="13.6" fill="#ffffff" textLength="45.5" lengthAdjust="spacingAndGlyphs" >Add-ins</text>
<rect x="1780.5" y="51" width="34.5" height="34" fill="none" stroke="#a8a8a8" stroke-width="1.3" />
<rect x="1780.5" y="51" width="34.5" height="4" fill="#a8a8a8" />
<line x1="1780.5" y1="65" x2="1815" y2="65" stroke="#a8a8a8" stroke-width="1.3" />
<line x1="1780.5" y1="76" x2="1815" y2="76" stroke="#a8a8a8" stroke-width="1.3" />
<line x1="1792" y1="76" x2="1792" y2="85" stroke="#a8a8a8" stroke-width="1.3" />
<line x1="1803.5" y1="76" x2="1803.5" y2="85" stroke="#a8a8a8" stroke-width="1.3" />
<circle cx="1796.5" cy="65.5" r="10.5" fill="#292929" stroke="#e0e0e0" stroke-width="1.4" />
<rect x="1790.5" y="64" width="4" height="7" fill="#9a9a9a" />
<rect x="1795" y="59.5" width="4" height="11.5" fill="#d0d0d0" />
<rect x="1799.5" y="61.5" width="4" height="9.5" fill="#3a96dd" />
<path d="M1804 73l11 11.5" fill="none" stroke="#e0e0e0" stroke-width="1.5" stroke-linecap="round" stroke-linejoin="round"/>
<text x="1772" y="106.263" font-family='"Liberation Sans", sans-serif' font-size="15.3" fill="#ffffff" textLength="52" lengthAdjust="spacingAndGlyphs" >Analyze</text>
<text x="1782" y="126.263" font-family='"Liberation Sans", sans-serif' font-size="15.3" fill="#ffffff" textLength="31" lengthAdjust="spacingAndGlyphs" >Data</text>
<path d="M1887 144.2L1892 149.8L1897 144.2" fill="none" stroke="#e0e0e0" stroke-width="1.5" stroke-linecap="round" stroke-linejoin="round"/>
<text x="959.5" y="875" font-family='"DejaVu Sans", sans-serif' font-size="76" fill="#dddddd" font-weight="700" text-anchor="middle" textLength="203" lengthAdjust="spacingAndGlyphs" stroke="#dddddd" stroke-width="6" stroke-linejoin="round" opacity=".86">نفذلي</text>
<text x="864" y="922.5" font-family='"Liberation Sans", sans-serif' font-size="33" fill="rgba(221,221,221,.86)" font-weight="700" textLength="193.5" lengthAdjust="spacingAndGlyphs" >nafezly.com</text>
</svg>
</div></body></html>
